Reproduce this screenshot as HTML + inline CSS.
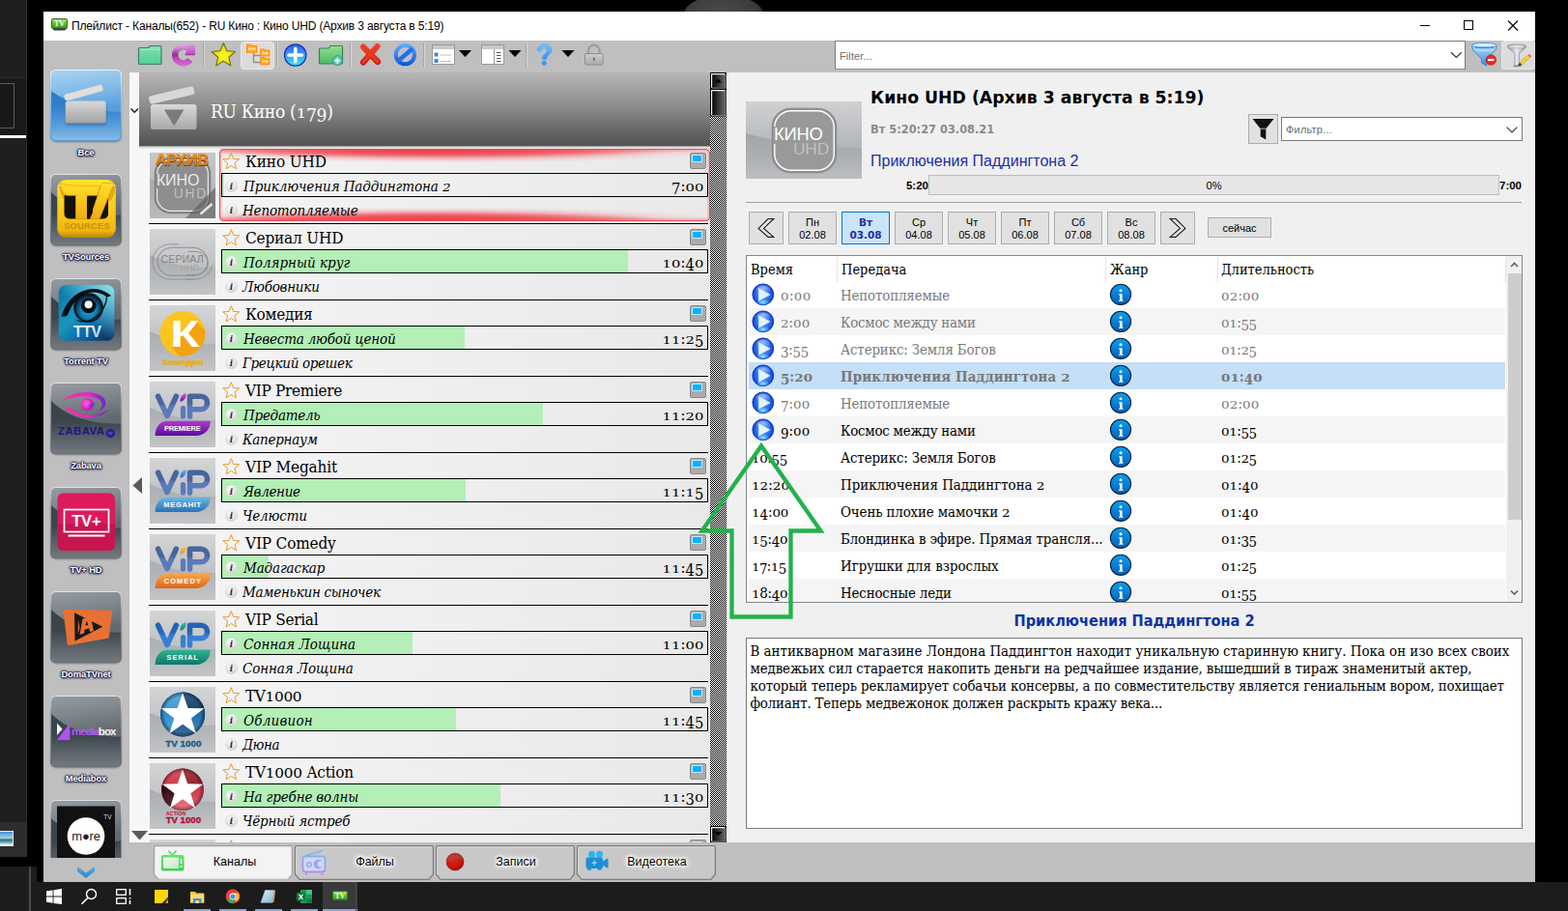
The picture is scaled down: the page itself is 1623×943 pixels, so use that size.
<!DOCTYPE html>
<html lang="ru"><head><meta charset="utf-8"><title>Плейлист</title>
<style>

*{box-sizing:border-box;margin:0;padding:0}
html,body{width:1623px;height:943px;overflow:hidden;background:#000}
body{position:relative;font-family:"Liberation Sans",sans-serif;font-size:12px;color:#000}
.abs{position:absolute}
.ser{font-family:"DejaVu Serif Condensed","DejaVu Serif","Liberation Serif",serif}
.nw{white-space:nowrap}
svg{display:block;overflow:visible}
.o0{display:inline-block;transform:translateY(.1em) scaleY(.71)}
.o3{display:inline-block;transform:translateY(.2em)}

#dleft{left:0;top:0;width:28px;height:897px;background:#1f1f1f;border-right:1px solid #2b2b2b}
#dband{left:0;top:80px;width:27px;height:60px;background:#191919;border-top:1px solid #2b2b2b}
#dbox{left:-1px;top:86px;width:16px;height:47px;border:1px solid #5a5a5a}
#dline{left:0;top:140px;width:27px;height:3px;background:#fff}
#dband2{left:0;top:851px;width:28px;height:36px;background:#2d2d2d}
#dthumb{left:0;top:860px;width:14px;height:16px;background:linear-gradient(#4a90d8,#9fd0ee 45%,#3a7a48 60%,#5d9ad0 75%,#fff);border:1px solid #e8e8e8;border-left:0}
#dblack{left:0;top:887px;width:45px;height:10px;background:#000}
#dblob{left:706px;top:0;width:86px;height:12px;overflow:hidden}
#dblob:before{content:"";position:absolute;left:2px;top:-5px;width:82px;height:40px;border-radius:50%;background:radial-gradient(ellipse at 45% 40%,#4a4a4a 0,#3c3c3c 55%,#2c2c2c 80%,#000 100%)}
#win{left:45px;top:12px;width:1544px;height:901px;background:#bfbfbf}

#tb{left:45px;top:12px;width:1544px;height:30px;background:#fff}
#tbtitle{left:74px;top:20px;font-size:12px;line-height:14px;letter-spacing:-0.16px;color:#000}
#tbicon{left:53px;top:19px}

#tsel{left:249px;top:43px;width:35px;height:29px;background:#dcdcdc;border:1px solid #e9e9e9;border-radius:4px}
#flt{left:864px;top:42px;width:653px;height:30px;background:#fff;border:1px solid #7a7a7a;border-bottom-color:#8c8c8c}
#flt span{position:absolute;left:4px;top:9px;font-size:11px;color:#6d6d6d;letter-spacing:0.1px}
#tsel2{left:1554px;top:42px;width:35px;height:30px;background:#dcdcdc;border:1px solid #e6e6e6;border-radius:3px}

.sb{left:52px;width:74px;height:74px}
.sbl{left:45px;width:88px;text-align:center;font-size:9.4px;font-weight:bold;line-height:12px;color:#fff;letter-spacing:-0.1px;text-shadow:0 0 1.5px #120c3a,0 0 1.5px #120c3a,0 0 2px #120c3a,0 1px 2.5px #120c3a,0 0 3px rgba(18,12,58,.8)}

#lst{left:134px;top:75px;width:601px;height:797px;background:linear-gradient(90deg,#f7f7f7 0,#f3f3f3 120px,#e9e9e9 100%);overflow:hidden}
#lhd{left:144px;top:75px;width:591px;height:76px;background:linear-gradient(180deg,#b6b6b6 0,#8e8e8e 45%,#606060 85%,#545454 100%)}
#lhd2{left:144px;top:151px;width:591px;height:3px;background:linear-gradient(180deg,#8a8a8a,#d8d8d8 50%,#efefef)}
#lhdt{left:218px;top:103px;font-size:19px;line-height:24px;color:#fff;letter-spacing:-0.3px}
.sepl{left:154px;width:579px;height:1px;background:#000}
.logo{left:155px;width:68px;height:68px;background:linear-gradient(180deg,#adb0b4 0,#abaeb2 40%,#b4b7ba 70%,#c3c5c7 100%);overflow:hidden}
.logo:before{content:"";position:absolute;left:-50px;top:-120px;width:220px;height:160px;border-radius:50%;background:linear-gradient(180deg,#d3d5d7 0,#d3d5d7 75%,#cdcfd1 82%,#bec0c3 100%)}
.logo svg{position:absolute;left:0;top:0}
.cn{left:254px;font-size:17px;line-height:20px;color:#000}
.pbox{left:229px;width:504px;height:25px;border:1px solid #000;overflow:hidden}
.pbar{position:absolute;left:0;top:0;height:23px;background:#b3efb6}
.pt{left:252px;font-size:15px;line-height:18px;font-style:italic;color:#000}
.pt2{left:251px;font-size:15px;line-height:18px;font-style:italic;color:#000}
.tm{right:894.5px;font-size:16.4px;line-height:18px;color:#000;text-align:right;letter-spacing:0.1px}
.ii{width:13px;height:13px;border-radius:50%;background:radial-gradient(circle at 45% 35%,#fff 0,#e4e4e4 45%,#c4c4c4 100%);font-family:"DejaVu Serif Condensed","Liberation Serif",serif;font-style:italic;font-weight:bold;font-size:9.8px;line-height:13.5px;text-align:center;color:#2c2c2c}
.mon{left:714px;width:17px;height:17px;background:#ababab;border:1px solid #8a8a8a;border-radius:2px}
.mon:before{content:"";position:absolute;left:1px;top:1px;width:11px;height:8px;background:#00b4ff;border:1px solid #c4e8fa;box-sizing:border-box}
#selbox{left:227px;top:154px;width:508px;height:75px;border:1px solid #e2545e;border-radius:4px;background:radial-gradient(ellipse 250px 8px at 42% 0,rgba(238,60,70,.8) 0,rgba(240,80,90,.6) 60%,rgba(242,130,136,0) 100%),radial-gradient(ellipse 310px 15px at 46% -1px,rgba(238,50,62,.95) 0,rgba(239,66,76,.85) 35%,rgba(241,110,118,.55) 62%,rgba(243,160,164,.25) 82%,rgba(244,190,192,0) 100%),radial-gradient(ellipse 250px 8px at 42% 100%,rgba(238,60,70,.8) 0,rgba(240,80,90,.6) 60%,rgba(242,130,136,0) 100%),radial-gradient(ellipse 310px 15px at 44% calc(100% + 1px),rgba(238,50,62,.95) 0,rgba(239,66,76,.85) 35%,rgba(241,110,118,.55) 62%,rgba(243,160,164,.25) 82%,rgba(244,190,192,0) 100%),linear-gradient(180deg,rgba(240,120,128,.55) 0,rgba(240,150,156,0) 3px,rgba(240,150,156,0) 70px,rgba(240,120,128,.55) 100%),linear-gradient(90deg,rgba(240,120,128,.5) 0,rgba(240,150,156,0) 3px,rgba(240,150,156,0) 503px,rgba(240,120,128,.5) 100%)}

#rp{left:752px;top:75px;width:837px;height:797px;background:#f0f0f0}
#rlogo{left:772px;top:105px;width:120px;height:80px;background:linear-gradient(180deg,#a4a7ab 0,#a3a6aa 45%,#aeb1b4 75%,#bcbec1 100%);overflow:hidden}
#rlogo:before{content:"";position:absolute;left:-110px;top:-152px;width:460px;height:200px;border-radius:50%;background:linear-gradient(180deg,#cfd1d3 0,#cfd1d3 76%,#c6c8ca 84%,#b3b6b9 100%)}
#rtitle{left:901px;top:90px;font-family:"DejaVu Sans","Liberation Sans",sans-serif;font-weight:bold;font-size:17.3px;line-height:22px;color:#000}
#rdate{left:901px;top:127px;font-family:"DejaVu Sans","Liberation Sans",sans-serif;font-weight:bold;font-size:11.4px;line-height:14px;color:#8a8a8a}
#rprog{left:901px;top:157px;font-size:16px;line-height:20px;color:#1a2fa8}
#pb{left:961px;top:181px;width:591px;height:21px;background:#e6e6e6;border:1px solid #bcbcbc}
#pbt{left:961px;top:186px;width:591px;text-align:center;font-size:11px;line-height:13px;color:#000}
.bt{font-family:"Liberation Sans",sans-serif;font-weight:bold;font-size:11.5px;line-height:13px;color:#000}
#hr1{left:772px;top:209px;width:803px;height:1px;background:#a0a0a0}
.db{top:219px;width:50px;height:34px;background:#e1e1e1;border:1px solid #adadad;text-align:center;font-size:11px;line-height:13px;padding-top:4px;color:#000}
.dbs{background:#cce4f7;border-color:#0078d7;color:#1a2fa8;font-weight:bold;font-family:"DejaVu Sans","Liberation Sans",sans-serif;font-size:10.5px}
.nb{top:219px;width:36px;height:34px;background:#e1e1e1;border:1px solid #adadad}
#now{left:1250px;top:225px;width:66px;height:21px;background:#e1e1e1;border:1px solid #adadad;text-align:center;font-size:11px;line-height:20px}
#fbtn{left:1292px;top:118px;width:31px;height:31px;background:#e1e1e1;border:1px solid #adadad}
#fcb{left:1326px;top:121px;width:250px;height:25px;background:#fff;border:1px solid #7a7a7a}
#fcb span{position:absolute;left:4px;top:6px;font-size:11px;color:#6d6d6d;letter-spacing:0.2px}
#epg{left:772px;top:264px;width:804px;height:360px;background:#fff;border:1px solid #828790;overflow:hidden}
.eh{position:absolute;top:4px;font-size:14.5px;line-height:20px;color:#000}
.er{position:absolute;left:2px;width:783px;height:28px}
.er.alt{background:#f5f5f5}
.er.sel{background:#c5dff6}
.er>span{position:absolute;top:5px;font-size:14.9px;line-height:20px;white-space:nowrap}
.er.old>span{color:#7a7a7a}
.er.sel>span{font-weight:bold;color:#777}
.c1{left:33px}.c1b{left:3px}.c2{left:95px}.c4{left:489px}
.vsep{position:absolute;top:1px;width:1px;height:26px;background:#e5e5e5}
#dtitle{left:772px;top:633px;width:804px;text-align:center;font-family:"DejaVu Sans Condensed","DejaVu Sans","Liberation Sans",sans-serif;font-weight:bold;font-size:16.2px;line-height:20px;color:#0d33a6}
#desc{left:772px;top:660px;width:804px;height:198px;background:#fff;border:1px solid #7a7a7a;padding:4px 0 4px 3.5px;white-space:nowrap;font-size:14.9px;line-height:18px;color:#000}

#tabbar{left:134px;top:872px;width:1455px;height:41px;background:#bfbfbf}
.tab{top:875px;width:144px;height:36px}
.tabl{top:885px;font-size:12.5px;line-height:15px;color:#000;text-align:center;width:100px}
.tabl.g{text-shadow:0 0 2px #fff,0 0 3px #fff,0 0 4px #fff,0 0 5px #fff,0 0 6px #fff,0 0 7px rgba(255,255,255,.8)}

#tk{left:0;top:913px;width:1623px;height:30px;background:#1c1c1c}
#tk0{left:0;top:897px;width:38px;height:16px;background:#1c1c1c}
#tkl{left:30px;top:897px;width:2px;height:46px;background:#4a4a4a}
#tkact{left:334px;top:913px;width:36px;height:30px;background:#3a3a3a}
.tku{top:941px;height:2px;background:#8aa7cf}

</style></head>
<body>
<!-- p_desktop -->
<div id="win" class="abs"></div>
<div id="dblob" class="abs"></div><div id="dleft" class="abs"></div><div id="dband" class="abs"></div><div id="dbox" class="abs"></div><div id="dline" class="abs"></div>
<div id="dband2" class="abs"></div><div id="dthumb" class="abs"></div><div id="dblack" class="abs"></div>
<!-- p_titlebar -->
<div id="tb" class="abs"></div><svg id="tbicon" class="abs" width="17" height="13" viewBox="0 0 17 13">
<defs><linearGradient id="tvg" x1="0" y1="0" x2="0" y2="1"><stop offset="0" stop-color="#8fe04a"/><stop offset="1" stop-color="#2f9a12"/></linearGradient></defs>
<rect x="0.5" y="0.5" width="16" height="10" rx="1" fill="url(#tvg)" stroke="#3d6a2a" stroke-width="1"/>
<path d="M1 10.5h15l-2 2H3z" fill="#2c3e50"/>
<text x="8.5" y="8.3" font-family="Liberation Serif" font-weight="bold" font-size="8" fill="#fff" text-anchor="middle">TV</text>
</svg>
<div id="tbtitle" class="abs nw">Плейлист - Каналы(652) - RU Кино : Кино UHD (Архив 3 августа в 5:19)</div><svg class="abs" style="left:1460px;top:12px" width="128" height="30" viewBox="0 0 128 30">
<path d="M10 14.5h10" stroke="#000" stroke-width="1"/>
<rect x="55.5" y="9.5" width="9" height="9" fill="none" stroke="#000" stroke-width="1"/>
<path d="M101 9.5l10 10M111 9.5l-10 10" stroke="#000" stroke-width="1.1"/>
</svg>
<!-- p_toolbar -->
<div id="tsel" class="abs"></div><div id="tsel2" class="abs"></div><div id="flt" class="abs"><span>Filter...</span></div><svg class="abs" style="left:45px;top:42px" width="1544" height="33" viewBox="45 42 1544 33">
<defs>
<linearGradient id="gfold" x1="0" y1="0" x2="0" y2="1"><stop offset="0" stop-color="#7fe0b0"/><stop offset="1" stop-color="#52cf93"/></linearGradient>
<linearGradient id="gfold2" x1="0" y1="0" x2="0" y2="1"><stop offset="0" stop-color="#8fe08f"/><stop offset="1" stop-color="#4fb86a"/></linearGradient>
<linearGradient id="gpur" gradientUnits="userSpaceOnUse" x1="0" y1="45" x2="0" y2="69"><stop offset="0" stop-color="#e2b0e2"/><stop offset="0.22" stop-color="#cc84cc"/><stop offset="0.5" stop-color="#8c308c"/><stop offset="0.62" stop-color="#c040c0"/><stop offset="1" stop-color="#d478d4"/></linearGradient>
<linearGradient id="gpur2" gradientUnits="userSpaceOnUse" x1="0" y1="46" x2="0" y2="58"><stop offset="0" stop-color="#d898d8"/><stop offset="0.7" stop-color="#c855c8"/><stop offset="1" stop-color="#8c308c"/></linearGradient>
<radialGradient id="gstar" cx="0.5" cy="0.6" r="0.6"><stop offset="0" stop-color="#f6ff2a"/><stop offset="1" stop-color="#e6c810"/></radialGradient>
<linearGradient id="gplus" x1="0" y1="0" x2="0" y2="1"><stop offset="0" stop-color="#2f5fe8"/><stop offset="0.5" stop-color="#3f9af5"/><stop offset="1" stop-color="#2ff0f0"/></linearGradient>
<linearGradient id="gred" x1="0" y1="0" x2="0" y2="1"><stop offset="0" stop-color="#f04a2a"/><stop offset="1" stop-color="#c8140f"/></linearGradient>
<linearGradient id="gblue" x1="0" y1="0" x2="0" y2="1"><stop offset="0" stop-color="#5aa8ff"/><stop offset="1" stop-color="#0f58e0"/></linearGradient>
<linearGradient id="gq" x1="0" y1="0" x2="0" y2="1"><stop offset="0" stop-color="#7cc4ff"/><stop offset="1" stop-color="#2f8df2"/></linearGradient>
<linearGradient id="glock" x1="0" y1="0" x2="0" y2="1"><stop offset="0" stop-color="#cfcfcf"/><stop offset="1" stop-color="#a9a9a9"/></linearGradient>
<linearGradient id="gfun" x1="0" y1="0" x2="0" y2="1"><stop offset="0" stop-color="#bfe4ff"/><stop offset="1" stop-color="#2f8fe0"/></linearGradient>
<linearGradient id="gfun2" x1="0" y1="0" x2="1" y2="0"><stop offset="0" stop-color="#8a8f96"/><stop offset="0.5" stop-color="#e8eaee"/><stop offset="1" stop-color="#8a8f96"/></linearGradient>
</defs>
<!-- folder -->
<path d="M144.5 49.5h9l2 -2h10.5a1 1 0 0 1 1 1v17a1 1 0 0 1 -1 1h-21.5a1 1 0 0 1 -1 -1v-15a1 1 0 0 1 1 -1z" fill="url(#gfold)" stroke="#3f7f63" stroke-width="1.2"/>
<path d="M145 51h21" stroke="#a8efcd" stroke-width="1"/>
<!-- refresh -->
<path d="M196.8 61.9A8.6 8.6 0 1 1 196.4 51.5" fill="none" stroke="url(#gpur)" stroke-width="6.4"/>
<path d="M195.5 46.6L202 46.8L202 57.3L191.2 57.3Z" fill="url(#gpur2)"/>
<path d="M210.5 44v25" stroke="#a6a6a6" stroke-width="1"/><path d="M211.5 44v25" stroke="#d6d6d6" stroke-width="1"/>
<!-- star -->
<path d="M231.3 44.6l3.5 8.1l8.8 0.8l-6.7 5.8l2 8.6l-7.6 -4.6l-7.6 4.6l2 -8.6l-6.7 -5.8l8.8 -0.8z" fill="url(#gstar)" stroke="#7d7410" stroke-width="1.2" stroke-linejoin="round"/>
<!-- tree folders -->
<path d="M262.5 55v9.5h7M262.5 57.5h7" stroke="#8c8c8c" stroke-width="1.3" fill="none"/>
<g fill="#ffb52a" stroke="#ff8a10" stroke-width="1.2">
<path d="M255.6 46.3h4l1 1.3h5v6.6h-10z"/><path d="M269.8 51h3.6l1 1.3h4.3v5.7h-8.9z"/><path d="M269.8 59.6h3.6l1 1.3h4.3v5.7h-8.9z"/>
</g>
<path d="M257 50.5h7.5M271 55h6.5M271 63.5h6.5" stroke="#ffe9a8" stroke-width="1.4"/>
<path d="M286.5 44v25" stroke="#a6a6a6" stroke-width="1"/><path d="M287.5 44v25" stroke="#d6d6d6" stroke-width="1"/>
<!-- plus -->
<circle cx="305.7" cy="57" r="11.2" fill="url(#gplus)" stroke="#1f36b8" stroke-width="1.3"/>
<path d="M305.7 50.3v13.4M299 57h13.4" stroke="#fff" stroke-width="3.6" stroke-linecap="round"/>
<!-- folder plus -->
<path d="M331.5 50h8.5l2 -2.5h11.5a1 1 0 0 1 1 1v16.5a1 1 0 0 1 -1 1h-22a1 1 0 0 1 -1 -1v-14a1 1 0 0 1 1 -1z" fill="url(#gfold2)" stroke="#3f7f4f" stroke-width="1.2"/>
<circle cx="349.3" cy="62.7" r="5" fill="#52c8b8" stroke="#2f8f86" stroke-width="0.8"/>
<path d="M349.3 59.7v6M346.3 62.7h6" stroke="#fff" stroke-width="1.6"/>
<path d="M362.5 44v25" stroke="#a6a6a6" stroke-width="1"/><path d="M363.5 44v25" stroke="#d6d6d6" stroke-width="1"/>
<!-- red x -->
<path d="M376 48.500l15 15.500M390.500 48l-14.500 16.500" stroke="url(#gred)" stroke-width="6.200" stroke-linecap="round"/>
<path d="M376 48.500l15 15.500M390.500 48l-14.500 16.500" stroke="#ea3a22" stroke-width="3.400" stroke-linecap="round"/>
<!-- no sign -->
<circle cx="419.4" cy="56.7" r="9.6" fill="none" stroke="url(#gblue)" stroke-width="4"/>
<path d="M412 63l15 -12.5" stroke="#1f6ff0" stroke-width="4.4"/>
<path d="M438.5 44v25" stroke="#a6a6a6" stroke-width="1"/><path d="M439.5 44v25" stroke="#d6d6d6" stroke-width="1"/>
<!-- list icon -->
<rect x="447.5" y="46.5" width="23" height="20" fill="#fff" stroke="#9a9a9a" stroke-width="1"/>
<rect x="448" y="47" width="22" height="4" fill="#c9c9c9"/>
<rect x="449.5" y="54.5" width="4" height="4" fill="#3f86e8"/><rect x="449.5" y="61" width="4" height="4" fill="#3f86e8"/>
<path d="M456 57h11M456 63.5h11" stroke="#bdbdbd" stroke-width="1.2"/>
<path d="M475 52h13l-6.5 7z" fill="#000"/>
<!-- panel icon -->
<rect x="498.5" y="46.5" width="23" height="20" fill="#fff" stroke="#9a9a9a" stroke-width="1"/>
<rect x="499" y="47" width="22" height="4" fill="#c9c9c9"/>
<path d="M511.5 51v15.5" stroke="#9a9a9a" stroke-width="1"/>
<path d="M514 54.5h4.5M514 57.5h4.5M514 60.5h4.5M514 63.5h4.5" stroke="#555" stroke-width="1.1"/>
<path d="M526.5 52h13l-6.5 7z" fill="#000"/><path d="M544.5 44v25" stroke="#a6a6a6" stroke-width="1"/><path d="M545.5 44v25" stroke="#d6d6d6" stroke-width="1"/>
<!-- question -->
<path d="M556 52.5c0 -4.5 3.2 -6.8 7.5 -6.8c4.6 0 7.6 2.6 7.6 6.1c0 5 -5.6 5.2 -5.6 9.8h-4.4c0 -5.5 5 -6.5 5 -9.2c0 -1.6 -1.2 -2.6 -2.8 -2.6c-1.9 0 -3 1.2 -3.1 3.3z" fill="url(#gq)" stroke="#5aa8f0" stroke-width="0.6"/>
<circle cx="563.2" cy="65.3" r="2.5" fill="#3f9af5"/>
<path d="M581.5 52h13l-6.5 7z" fill="#000"/>
<!-- lock -->
<path d="M609 56v-3.5a5.8 5.8 0 0 1 11.6 0v3.5" fill="none" stroke="#9c9c9c" stroke-width="2.2"/>
<rect x="605.5" y="55.5" width="18.6" height="11.6" rx="1.5" fill="url(#glock)" stroke="#8f8f8f" stroke-width="1"/>
<rect x="614" y="59.5" width="1.6" height="3.4" fill="#666"/>
<!-- filter combobox chevron -->
<path d="M1502 54.200l5.400 5.300l5.400 -5.300" fill="none" stroke="#333" stroke-width="1.200"/>
<!-- funnel blue w/ red minus -->
<path d="M1524 46.700c0 -1.600 5.500 -2.100 12.300 -2.100s12.300 0.500 12.300 2.100v3.300c0 2 -2 3.200 -4 5.200l-5.800 5.600v7.400l-5.200 -3v-4.400l-5.800 -5.600c-2 -2 -3.800 -3.200 -3.800 -5.200z" fill="url(#gfun)" stroke="#2f86dc" stroke-width="0.900" stroke-linejoin="round"/>
<ellipse cx="1536.300" cy="46.600" rx="11" ry="1.500" fill="#d9f0ff"/>
<path d="M1526 48.600c3 1.100 17.600 1.100 20.600 0" fill="none" stroke="#2a7fd6" stroke-width="1.100"/>
<path d="M1527.500 51.800c3 1 14.600 1 17.600 0" fill="none" stroke="#e0f3ff" stroke-width="0.900" opacity=".85"/>
<circle cx="1543.300" cy="62" r="5.300" fill="#e8281f" stroke="#b8150f" stroke-width="0.6"/>
<rect x="1540.100" y="60.900" width="6.400" height="2.200" fill="#fff"/>
<!-- funnel gray w/ pencil -->
<path d="M1560.300 48.300c0 -1.700 4.400 -2.300 9.700 -2.300s9.700 0.600 9.700 2.300c0 2.200 -6.300 4.400 -7.300 7.700v12h-4.500v-12c-1 -3.300 -7.600 -5.500 -7.600 -7.700z" fill="url(#gfun2)" stroke="#8a8f97" stroke-width="0.700"/>
<ellipse cx="1570" cy="48.200" rx="8.700" ry="1.500" fill="#e4e6ea" stroke="#9a9fa6" stroke-width="0.500"/>
<ellipse cx="1570.500" cy="68.300" rx="4.500" ry="0.900" fill="rgba(60,60,60,.45)"/>
<path d="M1571.300 68.300l1.700 -3.600l8.600 -7.700l2.300 2.600l-8.600 7.700z" fill="#ecd23c" stroke="#b49a2a" stroke-width="0.500"/>
<path d="M1581.600 57l1.400 -1.250l2.300 2.600l-1.400 1.250z" fill="#ee5a66"/>
<path d="M1571.300 68.300l1.700 -3.600l2.300 2.600z" fill="#2c2c2c"/>
</svg>
<!-- p_sidebar -->
<div class="abs" style="left:45px;top:75px;width:89px;height:838px;background:#bfbfbf"></div><svg width="0" height="0" style="position:absolute"><defs>
<linearGradient id="sbB" x1="0" y1="0" x2="0" y2="1"><stop offset="0" stop-color="#38424a"/><stop offset="0.55" stop-color="#3b454d"/><stop offset="0.78" stop-color="#596168"/><stop offset="1" stop-color="#74797d"/></linearGradient>
<linearGradient id="sbT" x1="0" y1="0" x2="0.25" y2="1"><stop offset="0" stop-color="#969ca1"/><stop offset="0.5" stop-color="#7f868b"/><stop offset="1" stop-color="#626a70"/></linearGradient>
<linearGradient id="sbS" x1="0" y1="0" x2="0" y2="1"><stop offset="0" stop-color="#dfe3e6"/><stop offset="0.25" stop-color="#9aa0a5"/><stop offset="1" stop-color="#6a7075"/></linearGradient>
<linearGradient id="sbB0" x1="0" y1="0" x2="0" y2="1"><stop offset="0" stop-color="#2576c4"/><stop offset="0.5" stop-color="#2e7fcb"/><stop offset="0.8" stop-color="#5a9fdc"/><stop offset="1" stop-color="#86bbe8"/></linearGradient>
<linearGradient id="sbT0" x1="0" y1="0" x2="0.2" y2="1"><stop offset="0" stop-color="#a8d4f4"/><stop offset="0.6" stop-color="#7fb8e6"/><stop offset="1" stop-color="#5a9fdc"/></linearGradient>
<linearGradient id="sbS0" x1="0" y1="0" x2="0" y2="1"><stop offset="0" stop-color="#eaf4fc"/><stop offset="0.3" stop-color="#a4cdee"/><stop offset="1" stop-color="#5a9bd6"/></linearGradient>
<filter id="sbsh" x="-10%" y="-10%" width="120%" height="125%"><feGaussianBlur stdDeviation="1.1"/></filter>
</defs></svg><svg class="sb abs" style="top:72px" width="74" height="74" viewBox="0 0 74 74"><rect x="1" y="2.5" width="72" height="72" rx="5" fill="rgba(0,0,0,.55)" filter="url(#sbsh)"/>
<rect x="0.5" y="0.5" width="73" height="73" rx="5" fill="url(#sbB0)"/>
<path d="M0.5 5.5a5 5 0 0 1 5 -5h63a5 5 0 0 1 5 5V44C52 43 22 37 0.5 22Z" fill="url(#sbT0)"/>
<rect x="0.5" y="0.5" width="73" height="73" rx="5" fill="none" stroke="url(#sbS0)" stroke-width="1.1"/><defs><linearGradient id="gcl" x1="0" y1="0" x2="0" y2="1"><stop offset="0" stop-color="#d8d8d8"/><stop offset="1" stop-color="#a4a4a4"/></linearGradient></defs>
<rect x="16.5" y="34.5" width="41.5" height="23" rx="2.5" fill="rgba(0,40,90,.35)" filter="url(#sbsh)"/>
<rect x="15.7" y="32.5" width="42" height="23" rx="2.5" fill="url(#gcl)"/>
<rect x="15.7" y="25.800" width="41" height="7" rx="2.4" fill="#dedede" transform="rotate(-15.4 15.7 32.800)"/></svg><div class="sbl abs nw" style="top:152px">Все</div><svg class="sb abs" style="top:180px" width="74" height="74" viewBox="0 0 74 74"><rect x="1" y="2.5" width="72" height="72" rx="5" fill="rgba(0,0,0,.55)" filter="url(#sbsh)"/>
<rect x="0.5" y="0.5" width="73" height="73" rx="5" fill="url(#sbB)"/>
<path d="M0.5 5.5a5 5 0 0 1 5 -5h63a5 5 0 0 1 5 5V42.500C54 43.500 22 40 0.500 18.500Z" fill="url(#sbT)"/>
<rect x="0.5" y="0.5" width="73" height="73" rx="5" fill="none" stroke="url(#sbS)" stroke-width="1.1"/><defs><linearGradient id="gtvs" x1="0" y1="0" x2="0" y2="1"><stop offset="0" stop-color="#ffe22e"/><stop offset="0.7" stop-color="#f6c216"/><stop offset="0.88" stop-color="#f0b40e"/><stop offset="1" stop-color="#b88508"/></linearGradient>
<linearGradient id="gtvl" x1="0" y1="0" x2="0" y2="1"><stop offset="0" stop-color="#ffe02a"/><stop offset="1" stop-color="#f0ac12"/></linearGradient></defs>
<rect x="7.3" y="6" width="60.5" height="60" rx="9" fill="url(#gtvs)"/>
<path d="M9.500 13c1 8 3 13.500 8 15h45c3 -4 4.500 -9 5 -15z" fill="#d9970f" opacity=".75"/>
<rect x="14.5" y="19" width="45.5" height="27.5" rx="5" fill="#15110a"/>
<path d="M10.500 9.500c6 2.300 14 2.800 22 2.800h19l-2.500 10h-11v24.200h-11.500v-24.200h-8.500c-4.500 0 -7 -6.500 -7.500 -12.800z" fill="url(#gtvl)" stroke="#e3a412" stroke-width="0.7"/>
<path d="M53.500 9.500h12.500l-15 37h-10z" fill="url(#gtvl)" stroke="#e3a412" stroke-width="0.7"/>
<path d="M38 23.500l6.200 15.500l-3.200 7.500h-3z" fill="#15110a"/>
<text x="38" y="56.600" font-family="Liberation Sans" font-weight="bold" font-size="9.3" fill="#c4920e" text-anchor="middle" letter-spacing="0.25">SOURCES</text></svg><div class="sbl abs nw" style="top:260px">TVSources</div><svg class="sb abs" style="top:288px" width="74" height="74" viewBox="0 0 74 74"><rect x="1" y="2.5" width="72" height="72" rx="5" fill="rgba(0,0,0,.55)" filter="url(#sbsh)"/>
<rect x="0.5" y="0.5" width="73" height="73" rx="5" fill="url(#sbB)"/>
<path d="M0.5 5.5a5 5 0 0 1 5 -5h63a5 5 0 0 1 5 5V42.500C54 43.500 22 40 0.500 18.500Z" fill="url(#sbT)"/>
<rect x="0.5" y="0.5" width="73" height="73" rx="5" fill="none" stroke="url(#sbS)" stroke-width="1.1"/><defs><linearGradient id="gttv" x1="0" y1="0" x2="0.9" y2="1"><stop offset="0" stop-color="#0a74a4"/><stop offset="0.45" stop-color="#1796bd"/><stop offset="0.75" stop-color="#0b62a0"/><stop offset="1" stop-color="#07315f"/></linearGradient>
<linearGradient id="gttv2" x1="0" y1="1" x2="1" y2="0"><stop offset="0.45" stop-color="rgba(140,230,236,0)"/><stop offset="1" stop-color="rgba(150,234,238,.95)"/></linearGradient>
<radialGradient id="geye" cx="0.5" cy="0.6" r="0.55"><stop offset="0" stop-color="#1fa8d4"/><stop offset="0.55" stop-color="#0f7fb2"/><stop offset="1" stop-color="#06324f"/></radialGradient>
<linearGradient id="gttvt" x1="0" y1="0" x2="0" y2="1"><stop offset="0" stop-color="#ffffff"/><stop offset="1" stop-color="#a8c8ee"/></linearGradient></defs>
<rect x="8.7" y="7" width="57.700" height="57.800" rx="7.500" fill="url(#gttv)"/><rect x="8.7" y="7" width="57.700" height="57.800" rx="7.500" fill="url(#gttv2)"/>
<circle cx="39.600" cy="30.500" r="15.300" fill="#081722"/>
<circle cx="39.600" cy="31" r="13" fill="url(#geye)"/><circle cx="39.600" cy="28.500" r="7.800" fill="#050f18"/><circle cx="39.600" cy="27.300" r="4" fill="#fff"/>
<path d="M11.500 39c4 -12 12 -24 28 -27.500c10 -2 18 2 23.500 6.500c-1.500 1.200 -3.500 1.500 -5 1c-5 -4 -12 -5.500 -18 -4c-11 3 -18 12 -22 23c-2 2 -4.500 2 -6.500 1z" fill="#070d14"/>
<path d="M58.500 18c0 10 -6 20 -16 25c-5 2.500 -10 2.500 -15 0.500" fill="none" stroke="#070d14" stroke-width="1.300"/>
<text x="38.300" y="61.300" font-family="Liberation Sans" font-weight="bold" font-size="15.600" fill="url(#gttvt)" text-anchor="middle" letter-spacing="-0.300">TTV</text></svg><div class="sbl abs nw" style="top:368px">Torrent TV</div><svg class="sb abs" style="top:396px" width="74" height="74" viewBox="0 0 74 74"><rect x="1" y="2.5" width="72" height="72" rx="5" fill="rgba(0,0,0,.55)" filter="url(#sbsh)"/>
<rect x="0.5" y="0.5" width="73" height="73" rx="5" fill="url(#sbB)"/>
<path d="M0.5 5.5a5 5 0 0 1 5 -5h63a5 5 0 0 1 5 5V42.500C54 43.500 22 40 0.500 18.500Z" fill="url(#sbT)"/>
<rect x="0.5" y="0.5" width="73" height="73" rx="5" fill="none" stroke="url(#sbS)" stroke-width="1.1"/><defs><linearGradient id="gzab" gradientUnits="userSpaceOnUse" x1="12" y1="0" x2="62" y2="0"><stop offset="0" stop-color="#ff28a8"/><stop offset="0.55" stop-color="#e82ac0"/><stop offset="1" stop-color="#4a28c8"/></linearGradient>
<radialGradient id="gzb" cx="0.4" cy="0.4" r="0.7"><stop offset="0" stop-color="#ff6ad8"/><stop offset="0.6" stop-color="#e020c0"/><stop offset="1" stop-color="#8a28c8"/></radialGradient></defs>
<path d="M12.500 18.500c10 -9 32 -12 42 -3.500c5 4.500 3 12.500 -4 14.500c4 -4 4 -9.500 0 -12c-9 -5.500 -26 -3.500 -38 1z" fill="url(#gzab)"/>
<path d="M16 26.500c2 -1.500 4.500 -1 6 0.500c8 8 26 9.500 38.500 1c-9 11 -33 11.500 -44.500 -1.500z" fill="url(#gzab)"/>
<circle cx="38.500" cy="22.800" r="6.800" fill="url(#gzb)"/><path d="M40 24c1 -3 4 -4 6.500 -2.500c-1 3.500 -3.500 5 -6.500 5z" fill="#8a30c8" opacity=".8"/>
<text x="8" y="53.700" font-family="Liberation Sans" font-weight="bold" font-size="11.400" fill="#24157e" letter-spacing="0.45">ZABAVA</text>
<circle cx="62.300" cy="52.600" r="4.600" fill="#2c1c96"/><text x="62.300" y="54.300" font-family="Liberation Sans" font-style="italic" font-size="4.500" fill="#9a90e0" text-anchor="middle">ru</text></svg><div class="sbl abs nw" style="top:476px">Zabava</div><svg class="sb abs" style="top:504px" width="74" height="74" viewBox="0 0 74 74"><rect x="1" y="2.5" width="72" height="72" rx="5" fill="rgba(0,0,0,.55)" filter="url(#sbsh)"/>
<rect x="0.5" y="0.5" width="73" height="73" rx="5" fill="url(#sbB)"/>
<path d="M0.5 5.5a5 5 0 0 1 5 -5h63a5 5 0 0 1 5 5V42.500C54 43.500 22 40 0.500 18.500Z" fill="url(#sbT)"/>
<rect x="0.5" y="0.5" width="73" height="73" rx="5" fill="none" stroke="url(#sbS)" stroke-width="1.1"/><rect x="7.500" y="6.500" width="59.500" height="59.500" rx="6" fill="#dc1a5c"/><path d="M7.500 38h59.500v22a6 6 0 0 1 -6 6h-47.500a6 6 0 0 1 -6 -6z" fill="#c7154f"/>
<rect x="14.500" y="23.500" width="46" height="23" fill="none" stroke="#fff" stroke-width="1.700"/>
<path d="M18.500 50.500h38" stroke="#fff" stroke-width="1.800"/>
<text x="37.300" y="41" font-family="Liberation Sans" font-weight="bold" font-size="16.500" fill="#fff" text-anchor="middle" letter-spacing="-0.200">TV+</text></svg><div class="sbl abs nw" style="top:584px">TV+ HD</div><svg class="sb abs" style="top:612px" width="74" height="74" viewBox="0 0 74 74"><rect x="1" y="2.5" width="72" height="72" rx="5" fill="rgba(0,0,0,.55)" filter="url(#sbsh)"/>
<rect x="0.5" y="0.5" width="73" height="73" rx="5" fill="url(#sbB)"/>
<path d="M0.5 5.5a5 5 0 0 1 5 -5h63a5 5 0 0 1 5 5V42.500C54 43.500 22 40 0.500 18.500Z" fill="url(#sbT)"/>
<rect x="0.5" y="0.5" width="73" height="73" rx="5" fill="none" stroke="url(#sbS)" stroke-width="1.1"/><path d="M15 18.700l47.500 1.100a1.800 1.800 0 0 1 1.700 2l-3.300 25.200a2 2 0 0 1 -1.600 1.700l-39.500 7.200a1.800 1.800 0 0 1 -2.100 -1.500l-4.300 -33.700a1.800 1.800 0 0 1 1.600 -2z" fill="#e87034"/>
<path d="M25 22.200l29.200 14.600l-28.600 14.600z" fill="#17181a"/>
<path d="M30.500 45l3 -16.500l8.500 -1.500l3 14l-4 1l-0.800 -3.500l-4.500 1l-0.700 4zM36.300 35.500l2.800 -0.600l-1.200 -4.500z" fill="#e87034"/>
<path d="M29 30l1.500 8l-2 6z" fill="#e87034"/></svg><div class="sbl abs nw" style="top:692px">DomaTVnet</div><svg class="sb abs" style="top:720px" width="74" height="74" viewBox="0 0 74 74"><rect x="1" y="2.5" width="72" height="72" rx="5" fill="rgba(0,0,0,.55)" filter="url(#sbsh)"/>
<rect x="0.5" y="0.5" width="73" height="73" rx="5" fill="url(#sbB)"/>
<path d="M0.5 5.5a5 5 0 0 1 5 -5h63a5 5 0 0 1 5 5V42.500C54 43.500 22 40 0.500 18.500Z" fill="url(#sbT)"/>
<rect x="0.5" y="0.5" width="73" height="73" rx="5" fill="none" stroke="url(#sbS)" stroke-width="1.1"/><path d="M7 28.600l5.600 6.200l-5.600 6.200z" fill="#f4f4f4"/><path d="M7 46h13.400v-17.400z" fill="#b250f4"/>
<text x="22" y="41" font-family="Liberation Sans" font-weight="bold" font-size="11.500" fill="#b458f2" letter-spacing="-0.900">media</text>
<text x="49.800" y="41" font-family="Liberation Sans" font-weight="bold" font-size="11.500" fill="#f2f2f4" letter-spacing="-0.900">box</text></svg><div class="sbl abs nw" style="top:800px">Mediabox</div><svg class="sb abs" style="top:828px;height:60px;overflow:hidden" width="74" height="60" viewBox="0 0 74 60"><rect x="1" y="2.5" width="72" height="78" rx="5" fill="rgba(0,0,0,.55)" filter="url(#sbsh)"/>
<rect x="0.5" y="0.5" width="73" height="79" rx="5" fill="url(#sbB)"/>
<path d="M0.5 5.5a5 5 0 0 1 5 -5h63a5 5 0 0 1 5 5V42.500C54 43.500 22 40 0.500 18.500Z" fill="url(#sbT)"/>
<rect x="0.5" y="0.5" width="73" height="79" rx="5" fill="none" stroke="url(#sbS)" stroke-width="1.1"/><rect x="7" y="6.500" width="60" height="56" fill="#111"/>
<circle cx="37" cy="37.500" r="19.300" fill="#fff"/>
<text x="37" y="42" font-family="Liberation Sans" font-size="13" fill="#222" text-anchor="middle" letter-spacing="-0.200">m●re</text>
<text x="59.500" y="19.500" font-family="Liberation Sans" font-size="6.500" fill="#ddd" text-anchor="middle">TV</text></svg><svg class="abs" style="left:79px;top:896px" width="20" height="14" viewBox="0 0 20 14"><defs><linearGradient id="gchv" x1="0" y1="0" x2="0" y2="1"><stop offset="0" stop-color="#4ab0e8"/><stop offset="1" stop-color="#2f86c0"/></linearGradient></defs><path d="M1 1l9 6.500l9 -6.500v5l-9 7l-9 -7z" fill="url(#gchv)"/></svg>
<!-- p_list -->
<div id="lst" class="abs"></div><div id="lhd" class="abs"></div><div id="lhd2" class="abs"></div><svg class="abs" style="left:150px;top:84px" width="60" height="56" viewBox="150 84 60 56">
<defs><linearGradient id="ghc" x1="0" y1="0" x2="0" y2="1"><stop offset="0" stop-color="#d9d9d9"/><stop offset="1" stop-color="#a8a8a8"/></linearGradient></defs>
<rect x="156" y="108" width="47.5" height="26" rx="2.5" fill="url(#ghc)"/>
<rect x="155.5" y="99.5" width="47.5" height="8.5" rx="2.6" fill="#d8d8d8" transform="rotate(-13 155.5 108)"/>
<path d="M170 113.5h20.4l-10.2 17z" fill="#7a7a7a"/></svg><div id="lhdt" class="abs nw ser">RU Кино (<span class="o0">1</span><span class="o3">7</span><span class="o3">9</span>)</div><svg class="abs" style="left:134px;top:75px" width="20" height="796" viewBox="134 75 20 796">
<path d="M135.5 112.5l3.7 3.7l3.7 -3.7" fill="none" stroke="#222" stroke-width="1.6"/>
<path d="M147 494v17l-9.5 -8.5z" fill="#5a5a5a"/>
<path d="M136 860h17l-8.5 9.5z" fill="#5a5a5a"/></svg><div id="selbox" class="abs"></div><div class="logo abs" style="top:158px"><svg width="68" height="68" viewBox="0 0 68 68"><defs><linearGradient id="garh" x1="0" y1="0" x2="0" y2="1"><stop offset="0" stop-color="#f09a2a"/><stop offset="1" stop-color="#d8700f"/></linearGradient></defs>
<rect x="0" y="0" width="68" height="68" fill="rgba(160,160,160,.25)"/>
<rect x="5.5" y="5.5" width="57" height="57" rx="16" fill="#8e8e8e" stroke="#7f7f7f" stroke-width="1.4"/>
<rect x="7.6" y="7.6" width="52.8" height="52.8" rx="14.5" fill="none" stroke="#e9e9e9" stroke-width="1.2"/>
<rect x="6.500" y="22" width="2.600" height="15" fill="#8e8e8e"/>
<text x="6.900" y="34" font-family="Liberation Sans" font-size="16" fill="#f4f4f4" fill-opacity=".92" textLength="44.500" lengthAdjust="spacing">КИНО</text>
<text x="24.700" y="46.800" font-family="Liberation Sans" font-size="13.800" fill="#c8c8c8" fill-opacity=".9" textLength="33.500" lengthAdjust="spacing">UHD</text>
<path d="M68 36v32h-31z" fill="rgba(90,90,90,.62)"/>
<path d="M52.5 63.5l12 -10.5" stroke="#e4e4e4" stroke-width="2.6"/>
<text x="5.8" y="13" font-family="Liberation Sans" font-weight="bold" font-size="16.3" fill="#4a2806" opacity="0.75" letter-spacing="-0.3" transform="translate(0.6,1.3)">АРХИВ</text>
<text x="5.8" y="13" font-family="Liberation Sans" font-weight="bold" font-size="16.3" fill="url(#garh)" letter-spacing="-0.3">АРХИВ</text>
</svg></div><svg class="abs" style="left:230px;top:158px" width="19" height="18" viewBox="0 0 19 18"><path d="M9.30 0.70L11.59 6.44L17.76 6.85L13.01 10.81L14.53 16.80L9.30 13.50L4.07 16.80L5.59 10.81L0.84 6.85L7.01 6.44Z" fill="none" stroke="#e59a2c" stroke-width="1" stroke-linejoin="miter"/></svg><div id="cn0" class="cn abs nw ser" style="top:157px;letter-spacing:-0.098px">Кино UHD</div><div class="mon abs" style="top:158px"></div><div class="pbox abs" style="top:179px"><div class="pbar" style="width:2px"></div></div><div class="ii abs" style="left:233px;top:186px">i</div><div id="pa0" class="pt abs nw ser" style="top:184px;letter-spacing:-0.095px">Приключения Паддингтона <span class="o0">2</span></div><div class="tm abs nw ser" style="top:184px"><span class="o3">7</span>:<span class="o0">0</span><span class="o0">0</span></div><div class="ii abs" style="left:233px;top:211px">i</div><div id="pb0" class="pt2 abs nw ser" style="top:209px;letter-spacing:-0.183px">Непотопляемые</div><div class="sepl abs" style="top:231px"></div><div class="logo abs" style="top:237px"><svg width="68" height="68" viewBox="0 0 68 68">
<path d="M30.5 15.8h-9.5a18.2 18.2 0 0 0 0 36.4h26a18.2 18.2 0 0 0 18 -15" fill="none" stroke="#8f8f8f" stroke-width="0.9"/>
<path d="M39.5 23.5h9a12 12 0 0 1 0 24h-11M37.5 52h8.5" fill="none" stroke="#8f8f8f" stroke-width="0.9"/>
<rect x="8" y="19.3" width="52" height="29" rx="14.5" fill="none" stroke="#8c8c8c" stroke-width="1"/>
<text x="11.5" y="34.6" font-family="Liberation Sans" font-size="10.6" fill="#858585" letter-spacing="0.1">СЕРИАЛ</text>
<text x="31.5" y="42.6" font-family="Liberation Sans" font-size="8.6" fill="#a4a4a4" letter-spacing="0.3">UHD</text>
</svg></div><svg class="abs" style="left:230px;top:237px" width="19" height="18" viewBox="0 0 19 18"><path d="M9.30 0.70L11.59 6.44L17.76 6.85L13.01 10.81L14.53 16.80L9.30 13.50L4.07 16.80L5.59 10.81L0.84 6.85L7.01 6.44Z" fill="none" stroke="#e59a2c" stroke-width="1" stroke-linejoin="miter"/></svg><div id="cn1" class="cn abs nw ser" style="top:236px;letter-spacing:-0.161px">Сериал UHD</div><div class="mon abs" style="top:237px"></div><div class="pbox abs" style="top:258px"><div class="pbar" style="width:420px"></div></div><div class="ii abs" style="left:233px;top:265px">i</div><div id="pa1" class="pt abs nw ser" style="top:263px;letter-spacing:0.010px">Полярный круг</div><div class="tm abs nw ser" style="top:263px"><span class="o0">1</span><span class="o0">0</span>:<span class="o3">4</span><span class="o0">0</span></div><div class="ii abs" style="left:233px;top:290px">i</div><div id="pb1" class="pt2 abs nw ser" style="top:288px;letter-spacing:-0.234px">Любовники</div><div class="sepl abs" style="top:310px"></div><div class="logo abs" style="top:316px"><svg width="68" height="68" viewBox="0 0 68 68"><defs><linearGradient id="gkom" x1="0" y1="0" x2="1" y2="1"><stop offset="0" stop-color="#fdc822"/><stop offset="1" stop-color="#fabc18"/></linearGradient><clipPath id="ckom"><circle cx="34" cy="29.3" r="23.4"/></clipPath></defs>
<circle cx="34" cy="29.3" r="23.4" fill="url(#gkom)"/>
<path d="M23.500 43.500l23 -28.500l32 32l-30 30z" fill="#f4a30f" clip-path="url(#ckom)"/>
<text x="21.300" y="43.200" font-family="Liberation Sans" font-weight="bold" font-size="39.500" fill="#fff" textLength="30.300" lengthAdjust="spacingAndGlyphs">К</text>
<text x="34.400" y="62" font-family="Liberation Sans" font-weight="bold" font-size="9.900" fill="#7a5a08" opacity=".5" text-anchor="middle" letter-spacing="-0.1">Комедия</text><text x="34" y="61.500" font-family="Liberation Sans" font-weight="bold" font-size="9.900" fill="#f3b414" text-anchor="middle" letter-spacing="-0.1">Комедия</text>
</svg></div><svg class="abs" style="left:230px;top:316px" width="19" height="18" viewBox="0 0 19 18"><path d="M9.30 0.70L11.59 6.44L17.76 6.85L13.01 10.81L14.53 16.80L9.30 13.50L4.07 16.80L5.59 10.81L0.84 6.85L7.01 6.44Z" fill="none" stroke="#e59a2c" stroke-width="1" stroke-linejoin="miter"/></svg><div id="cn2" class="cn abs nw ser" style="top:315px;letter-spacing:-0.250px">Комедия</div><div class="mon abs" style="top:316px"></div><div class="pbox abs" style="top:337px"><div class="pbar" style="width:251px"></div></div><div class="ii abs" style="left:233px;top:344px">i</div><div id="pa2" class="pt abs nw ser" style="top:342px;letter-spacing:-0.195px">Невеста любой ценой</div><div class="tm abs nw ser" style="top:342px"><span class="o0">1</span><span class="o0">1</span>:<span class="o0">2</span><span class="o3">5</span></div><div class="ii abs" style="left:233px;top:369px">i</div><div id="pb2" class="pt2 abs nw ser" style="top:367px;letter-spacing:-0.349px">Грецкий орешек</div><div class="sepl abs" style="top:389px"></div><div class="logo abs" style="top:395px"><svg width="68" height="68" viewBox="0 0 68 68"><defs><linearGradient id="gv3" gradientUnits="userSpaceOnUse" x1="0" y1="12" x2="0" y2="38"><stop offset="0" stop-color="#48659c"/><stop offset="0.4" stop-color="#48659c"/><stop offset="0.56" stop-color="#5b7abc"/><stop offset="1" stop-color="#5b7abc"/></linearGradient>
<linearGradient id="gd3" x1="0" y1="0" x2="0" y2="1"><stop offset="0" stop-color="#f04af0"/><stop offset="1" stop-color="#6a12a4"/></linearGradient>
<linearGradient id="gp3" x1="0" y1="0" x2="0" y2="1"><stop offset="0" stop-color="#b23ad0"/><stop offset="1" stop-color="#560c9c"/></linearGradient></defs>
<g fill="none" stroke="url(#gv3)" stroke-linecap="round" stroke-linejoin="round">
<path d="M8.600 15.200L18 35.500L27.400 15.200" stroke-width="5.600"/><path d="M34.500 27.500V35.900" stroke-width="5.200"/><path d="M41.500 35.900V15.200H52.800a6.750 6.750 0 0 1 0 13.500H43" stroke-width="5.600"/></g>
<path d="M31.600 20.800C31 16 34 12.500 37.600 12C38 16.500 35.500 20.300 31.600 20.800Z" fill="url(#gd3)"/>
<path d="M18 40.800H62.800C62.800 50 56.500 56 48 56H5.600C5.600 47.500 10.500 40.800 18 40.800Z" fill="url(#gp3)"/>
<text x="14.9" y="51.400" font-family="Liberation Sans" font-weight="bold" font-size="7.500" fill="#fff" textLength="37.8" lengthAdjust="spacing">PREMIERE</text>
</svg></div><svg class="abs" style="left:230px;top:395px" width="19" height="18" viewBox="0 0 19 18"><path d="M9.30 0.70L11.59 6.44L17.76 6.85L13.01 10.81L14.53 16.80L9.30 13.50L4.07 16.80L5.59 10.81L0.84 6.85L7.01 6.44Z" fill="none" stroke="#e59a2c" stroke-width="1" stroke-linejoin="miter"/></svg><div id="cn3" class="cn abs nw ser" style="top:394px;letter-spacing:-0.309px">VIP Premiere</div><div class="mon abs" style="top:395px"></div><div class="pbox abs" style="top:416px"><div class="pbar" style="width:332px"></div></div><div class="ii abs" style="left:233px;top:423px">i</div><div id="pa3" class="pt abs nw ser" style="top:421px;letter-spacing:-0.256px">Предатель</div><div class="tm abs nw ser" style="top:421px"><span class="o0">1</span><span class="o0">1</span>:<span class="o0">2</span><span class="o0">0</span></div><div class="ii abs" style="left:233px;top:448px">i</div><div id="pb3" class="pt2 abs nw ser" style="top:446px;letter-spacing:-0.241px">Капернаум</div><div class="sepl abs" style="top:468px"></div><div class="logo abs" style="top:474px"><svg width="68" height="68" viewBox="0 0 68 68"><defs><linearGradient id="gv4" gradientUnits="userSpaceOnUse" x1="0" y1="12" x2="0" y2="38"><stop offset="0" stop-color="#48659c"/><stop offset="0.4" stop-color="#48659c"/><stop offset="0.56" stop-color="#5b7abc"/><stop offset="1" stop-color="#5b7abc"/></linearGradient>
<linearGradient id="gd4" x1="0" y1="0" x2="0" y2="1"><stop offset="0" stop-color="#5fb4f0"/><stop offset="1" stop-color="#2a6cc0"/></linearGradient>
<linearGradient id="gp4" x1="0" y1="0" x2="0" y2="1"><stop offset="0" stop-color="#6ab8e4"/><stop offset="1" stop-color="#2a70b8"/></linearGradient></defs>
<g fill="none" stroke="url(#gv4)" stroke-linecap="round" stroke-linejoin="round">
<path d="M8.600 15.200L18 35.500L27.400 15.200" stroke-width="5.600"/><path d="M34.500 27.500V35.900" stroke-width="5.200"/><path d="M41.500 35.900V15.200H52.800a6.750 6.750 0 0 1 0 13.500H43" stroke-width="5.600"/></g>
<path d="M31.600 20.800C31 16 34 12.500 37.600 12C38 16.500 35.500 20.300 31.600 20.800Z" fill="url(#gd4)"/>
<path d="M18 40.800H62.800C62.800 50 56.500 56 48 56H5.600C5.600 47.500 10.500 40.800 18 40.800Z" fill="url(#gp4)"/>
<text x="14.3" y="51.400" font-family="Liberation Sans" font-weight="bold" font-size="7.500" fill="#fff" textLength="38.9" lengthAdjust="spacing">MEGAHIT</text>
</svg></div><svg class="abs" style="left:230px;top:474px" width="19" height="18" viewBox="0 0 19 18"><path d="M9.30 0.70L11.59 6.44L17.76 6.85L13.01 10.81L14.53 16.80L9.30 13.50L4.07 16.80L5.59 10.81L0.84 6.85L7.01 6.44Z" fill="none" stroke="#e59a2c" stroke-width="1" stroke-linejoin="miter"/></svg><div id="cn4" class="cn abs nw ser" style="top:473px;letter-spacing:-0.168px">VIP Megahit</div><div class="mon abs" style="top:474px"></div><div class="pbox abs" style="top:495px"><div class="pbar" style="width:252px"></div></div><div class="ii abs" style="left:233px;top:502px">i</div><div id="pa4" class="pt abs nw ser" style="top:500px;letter-spacing:-0.301px">Явление</div><div class="tm abs nw ser" style="top:500px"><span class="o0">1</span><span class="o0">1</span>:<span class="o0">1</span><span class="o3">5</span></div><div class="ii abs" style="left:233px;top:527px">i</div><div id="pb4" class="pt2 abs nw ser" style="top:525px;letter-spacing:-0.148px">Челюсти</div><div class="sepl abs" style="top:547px"></div><div class="logo abs" style="top:553px"><svg width="68" height="68" viewBox="0 0 68 68"><defs><linearGradient id="gv5" gradientUnits="userSpaceOnUse" x1="0" y1="12" x2="0" y2="38"><stop offset="0" stop-color="#48659c"/><stop offset="0.4" stop-color="#48659c"/><stop offset="0.56" stop-color="#5b7abc"/><stop offset="1" stop-color="#5b7abc"/></linearGradient>
<linearGradient id="gd5" x1="0" y1="0" x2="0" y2="1"><stop offset="0" stop-color="#ffd23a"/><stop offset="1" stop-color="#f08a1a"/></linearGradient>
<linearGradient id="gp5" x1="0" y1="0" x2="0" y2="1"><stop offset="0" stop-color="#f8a848"/><stop offset="1" stop-color="#e0641a"/></linearGradient></defs>
<g fill="none" stroke="url(#gv5)" stroke-linecap="round" stroke-linejoin="round">
<path d="M8.600 15.200L18 35.500L27.400 15.200" stroke-width="5.600"/><path d="M34.500 27.500V35.900" stroke-width="5.200"/><path d="M41.500 35.900V15.200H52.800a6.750 6.750 0 0 1 0 13.500H43" stroke-width="5.600"/></g>
<path d="M31.600 20.800C31 16 34 12.500 37.600 12C38 16.500 35.500 20.300 31.600 20.800Z" fill="url(#gd5)"/>
<path d="M18 40.800H62.800C62.800 50 56.500 56 48 56H5.600C5.600 47.500 10.500 40.800 18 40.800Z" fill="url(#gp5)"/>
<text x="14.7" y="51.400" font-family="Liberation Sans" font-weight="bold" font-size="7.500" fill="#fff" textLength="38.2" lengthAdjust="spacing">COMEDY</text>
</svg></div><svg class="abs" style="left:230px;top:553px" width="19" height="18" viewBox="0 0 19 18"><path d="M9.30 0.70L11.59 6.44L17.76 6.85L13.01 10.81L14.53 16.80L9.30 13.50L4.07 16.80L5.59 10.81L0.84 6.85L7.01 6.44Z" fill="none" stroke="#e59a2c" stroke-width="1" stroke-linejoin="miter"/></svg><div id="cn5" class="cn abs nw ser" style="top:552px;letter-spacing:-0.154px">VIP Comedy</div><div class="mon abs" style="top:553px"></div><div class="pbox abs" style="top:574px"><div class="pbar" style="width:48px"></div></div><div class="ii abs" style="left:233px;top:581px">i</div><div id="pa5" class="pt abs nw ser" style="top:579px;letter-spacing:-0.143px">Мадагаскар</div><div class="tm abs nw ser" style="top:579px"><span class="o0">1</span><span class="o0">1</span>:<span class="o3">4</span><span class="o3">5</span></div><div class="ii abs" style="left:233px;top:606px">i</div><div id="pb5" class="pt2 abs nw ser" style="top:604px;letter-spacing:-0.265px">Маменькин сыночек</div><div class="sepl abs" style="top:626px"></div><div class="logo abs" style="top:632px"><svg width="68" height="68" viewBox="0 0 68 68"><defs><linearGradient id="gv6" gradientUnits="userSpaceOnUse" x1="0" y1="12" x2="0" y2="38"><stop offset="0" stop-color="#2864b4"/><stop offset="0.4" stop-color="#2864b4"/><stop offset="0.56" stop-color="#3680d4"/><stop offset="1" stop-color="#3680d4"/></linearGradient>
<linearGradient id="gd6" x1="0" y1="0" x2="0" y2="1"><stop offset="0" stop-color="#3fc0a4"/><stop offset="1" stop-color="#0f7f74"/></linearGradient>
<linearGradient id="gp6" x1="0" y1="0" x2="0" y2="1"><stop offset="0" stop-color="#30b494"/><stop offset="1" stop-color="#0c7868"/></linearGradient></defs>
<g fill="none" stroke="url(#gv6)" stroke-linecap="round" stroke-linejoin="round">
<path d="M8.600 15.200L18 35.500L27.400 15.200" stroke-width="5.600"/><path d="M34.500 27.500V35.900" stroke-width="5.200"/><path d="M41.500 35.900V15.200H52.800a6.750 6.750 0 0 1 0 13.500H43" stroke-width="5.600"/></g>
<path d="M31.600 20.800C31 16 34 12.500 37.600 12C38 16.500 35.500 20.300 31.600 20.800Z" fill="url(#gd6)"/>
<path d="M18 40.800H62.800C62.800 50 56.500 56 48 56H5.600C5.600 47.500 10.500 40.800 18 40.800Z" fill="url(#gp6)"/>
<text x="17.6" y="51.400" font-family="Liberation Sans" font-weight="bold" font-size="7.500" fill="#fff" textLength="32.3" lengthAdjust="spacing">SERIAL</text>
</svg></div><svg class="abs" style="left:230px;top:632px" width="19" height="18" viewBox="0 0 19 18"><path d="M9.30 0.70L11.59 6.44L17.76 6.85L13.01 10.81L14.53 16.80L9.30 13.50L4.07 16.80L5.59 10.81L0.84 6.85L7.01 6.44Z" fill="none" stroke="#e59a2c" stroke-width="1" stroke-linejoin="miter"/></svg><div id="cn6" class="cn abs nw ser" style="top:631px;letter-spacing:-0.268px">VIP Serial</div><div class="mon abs" style="top:632px"></div><div class="pbox abs" style="top:653px"><div class="pbar" style="width:197px"></div></div><div class="ii abs" style="left:233px;top:660px">i</div><div id="pa6" class="pt abs nw ser" style="top:658px;">Сонная Лощина</div><div class="tm abs nw ser" style="top:658px"><span class="o0">1</span><span class="o0">1</span>:<span class="o0">0</span><span class="o0">0</span></div><div class="ii abs" style="left:233px;top:685px">i</div><div id="pb6" class="pt2 abs nw ser" style="top:683px;letter-spacing:-0.102px">Сонная Лощина</div><div class="sepl abs" style="top:705px"></div><div class="logo abs" style="top:711px"><svg width="68" height="68" viewBox="0 0 68 68"><defs><clipPath id="ct7"><circle cx="34.1" cy="28.4" r="23"/></clipPath>
<radialGradient id="gtr7" cx="0.5" cy="0.5" r="0.5"><stop offset="0.8" stop-color="rgba(0,0,0,0)"/><stop offset="1" stop-color="rgba(8,30,60,.55)"/></radialGradient>
<linearGradient id="gts7" x1="0" y1="0" x2="0" y2="1"><stop offset="0" stop-color="rgba(255,255,255,.18)"/><stop offset="0.5" stop-color="rgba(255,255,255,0)"/><stop offset="1" stop-color="rgba(255,255,255,.22)"/></linearGradient></defs>
<circle cx="34.1" cy="28.4" r="23" fill="#0d3d6d"/><path d="M34.1 29.5L34.10 1.90L55.73 -0.27L60.35 20.97Z" fill="#0d3d6d" clip-path="url(#ct7)"/><path d="M34.1 29.5L60.35 20.97L69.10 40.87L50.32 51.83Z" fill="#1c70ad" clip-path="url(#ct7)"/><path d="M34.1 29.5L50.32 51.83L34.10 66.30L17.88 51.83Z" fill="#0f4a86" clip-path="url(#ct7)"/><path d="M34.1 29.5L17.88 51.83L-0.90 40.87L7.85 20.97Z" fill="#2f90d2" clip-path="url(#ct7)"/><path d="M34.1 29.5L7.85 20.97L12.47 -0.27L34.10 1.90Z" fill="#3b97d2" clip-path="url(#ct7)"/>
<circle cx="34.1" cy="28.4" r="23" fill="url(#gts7)"/><circle cx="34.1" cy="28.4" r="23" fill="url(#gtr7)"/>
<path d="M34.10 6.20L39.58 21.96L56.26 22.30L42.96 32.38L47.80 48.35L34.10 38.82L20.40 48.35L25.24 32.38L11.94 22.30L28.62 21.96Z" fill="#fff"/><text x="16.200" y="62" font-family="Liberation Sans" font-weight="bold" font-size="9.200" fill="#1d5b8c" stroke="#1d5b8c" stroke-width="0.350" textLength="37.300" lengthAdjust="spacingAndGlyphs">TV 1000</text></svg></div><svg class="abs" style="left:230px;top:711px" width="19" height="18" viewBox="0 0 19 18"><path d="M9.30 0.70L11.59 6.44L17.76 6.85L13.01 10.81L14.53 16.80L9.30 13.50L4.07 16.80L5.59 10.81L0.84 6.85L7.01 6.44Z" fill="none" stroke="#e59a2c" stroke-width="1" stroke-linejoin="miter"/></svg><div id="cn7" class="cn abs nw ser" style="top:710px;letter-spacing:-0.331px">TV<span class="o0">1</span><span class="o0">0</span><span class="o0">0</span><span class="o0">0</span></div><div class="mon abs" style="top:711px"></div><div class="pbox abs" style="top:732px"><div class="pbar" style="width:242px"></div></div><div class="ii abs" style="left:233px;top:739px">i</div><div id="pa7" class="pt abs nw ser" style="top:737px;letter-spacing:0.218px">Обливион</div><div class="tm abs nw ser" style="top:737px"><span class="o0">1</span><span class="o0">1</span>:<span class="o3">4</span><span class="o3">5</span></div><div class="ii abs" style="left:233px;top:764px">i</div><div id="pb7" class="pt2 abs nw ser" style="top:762px;letter-spacing:-0.424px">Дюна</div><div class="sepl abs" style="top:784px"></div><div class="logo abs" style="top:790px"><svg width="68" height="68" viewBox="0 0 68 68"><defs><clipPath id="ct8"><circle cx="34" cy="27.3" r="21.8"/></clipPath>
<radialGradient id="gtr8" cx="0.5" cy="0.5" r="0.5"><stop offset="0.8" stop-color="rgba(0,0,0,0)"/><stop offset="1" stop-color="rgba(70,6,14,.5)"/></radialGradient>
<linearGradient id="gts8" x1="0" y1="0" x2="0" y2="1"><stop offset="0" stop-color="rgba(255,255,255,.18)"/><stop offset="0.5" stop-color="rgba(255,255,255,0)"/><stop offset="1" stop-color="rgba(255,255,255,.22)"/></linearGradient></defs>
<circle cx="34" cy="27.3" r="21.8" fill="#8f1c28"/><path d="M34 28.5L34.00 2.34L54.50 0.28L58.88 20.42Z" fill="#8f1c28" clip-path="url(#ct8)"/><path d="M34 28.5L58.88 20.42L67.17 39.28L49.38 49.66Z" fill="#cf3c4b" clip-path="url(#ct8)"/><path d="M34 28.5L49.38 49.66L34.00 63.38L18.62 49.66Z" fill="#e14f5e" clip-path="url(#ct8)"/><path d="M34 28.5L18.62 49.66L0.83 39.28L9.12 20.42Z" fill="#3c0911" clip-path="url(#ct8)"/><path d="M34 28.5L9.12 20.42L13.50 0.28L34.00 2.34Z" fill="#cb3646" clip-path="url(#ct8)"/>
<circle cx="34" cy="27.3" r="21.8" fill="url(#gts8)"/><circle cx="34" cy="27.3" r="21.8" fill="url(#gtr8)"/>
<path d="M34.00 6.40L39.20 21.35L55.02 21.67L42.41 31.23L46.99 46.38L34.00 37.34L21.01 46.38L25.59 31.23L12.98 21.67L28.80 21.35Z" fill="#fff"/><text x="16.700" y="54.400" font-family="Liberation Sans" font-weight="bold" font-size="5.300" fill="#b0103a" textLength="20.700" lengthAdjust="spacingAndGlyphs">ACTION</text>
<text x="16.700" y="61.700" font-family="Liberation Sans" font-weight="bold" font-size="9" fill="#b0103a" stroke="#b0103a" stroke-width="0.350" textLength="36.300" lengthAdjust="spacingAndGlyphs">TV 1000</text></svg></div><svg class="abs" style="left:230px;top:790px" width="19" height="18" viewBox="0 0 19 18"><path d="M9.30 0.70L11.59 6.44L17.76 6.85L13.01 10.81L14.53 16.80L9.30 13.50L4.07 16.80L5.59 10.81L0.84 6.85L7.01 6.44Z" fill="none" stroke="#e59a2c" stroke-width="1" stroke-linejoin="miter"/></svg><div id="cn8" class="cn abs nw ser" style="top:789px;letter-spacing:-0.219px">TV<span class="o0">1</span><span class="o0">0</span><span class="o0">0</span><span class="o0">0</span> Action</div><div class="mon abs" style="top:790px"></div><div class="pbox abs" style="top:811px"><div class="pbar" style="width:288px"></div></div><div class="ii abs" style="left:233px;top:818px">i</div><div id="pa8" class="pt abs nw ser" style="top:816px;letter-spacing:-0.159px">На гребне волны</div><div class="tm abs nw ser" style="top:816px"><span class="o0">1</span><span class="o0">1</span>:<span class="o3">3</span><span class="o0">0</span></div><div class="ii abs" style="left:233px;top:843px">i</div><div id="pb8" class="pt2 abs nw ser" style="top:841px;letter-spacing:-0.220px">Чёрный ястреб</div><div class="sepl abs" style="top:863px"></div><div class="logo abs" style="top:869px;height:3px"></div><div class="mon abs" style="top:869px;height:4px;border-bottom:0"></div><svg class="abs" style="left:230px;top:869px" width="19" height="3" viewBox="0 0 19 3"><path d="M9.30 0.70L11.59 6.44L17.76 6.85L13.01 10.81L14.53 16.80L9.30 13.50L4.07 16.80L5.59 10.81L0.84 6.85L7.01 6.44Z" fill="none" stroke="#e59a2c" stroke-width="1" stroke-linejoin="miter"/></svg><div class="abs" style="left:735px;top:75px;width:17px;height:797px;background:#000"></div>
<svg class="abs" style="left:735px;top:75px" width="17" height="797" viewBox="0 0 17 797">
<defs><pattern id="chk" width="2" height="2" patternUnits="userSpaceOnUse"><rect width="2" height="2" fill="#fff"/><rect width="1" height="1" fill="#000"/><rect x="1" y="1" width="1" height="1" fill="#000"/></pattern>
<linearGradient id="gsb" x1="0" y1="0" x2="1" y2="0"><stop offset="0" stop-color="#050505"/><stop offset="1" stop-color="#686868"/></linearGradient></defs>
<rect x="0" y="45" width="17" height="736" fill="url(#chk)"/><rect x="0" y="0" width="17" height="17" fill="#000"/><rect x="2" y="2" width="13.500" height="13.5" fill="url(#gsb)"/><path d="M1.600 15.8V1.6H15.400" fill="none" stroke="#f6f6f6" stroke-width="1.200"/><path d="M15.900 1.6V16.1H1.600" fill="none" stroke="#7c7c7c" stroke-width="1.300"/><path d="M5 10.5l3.500 -4l3.500 4z" fill="#000"/><rect x="0" y="17" width="17" height="28.5" fill="#000"/><rect x="2" y="19" width="13.500" height="25.0" fill="url(#gsb)"/><path d="M1.600 44.3V18.6H15.400" fill="none" stroke="#f6f6f6" stroke-width="1.200"/><path d="M15.900 18.6V44.6H1.600" fill="none" stroke="#7c7c7c" stroke-width="1.300"/><rect x="0" y="780" width="17" height="17" fill="#000"/><rect x="2" y="782" width="13.500" height="13.5" fill="url(#gsb)"/><path d="M1.600 795.8V781.6H15.400" fill="none" stroke="#f6f6f6" stroke-width="1.200"/><path d="M15.900 781.6V796.1H1.600" fill="none" stroke="#7c7c7c" stroke-width="1.300"/><path d="M4.500 786l4 4.300l4 -4.300z" fill="#000"/></svg>
<!-- p_right -->
<div id="rp" class="abs"></div><div id="rlogo" class="abs"><svg style="position:absolute;left:0;top:0" width="120" height="80" viewBox="0 0 120 80">
<rect x="27.5" y="7.5" width="66" height="66" rx="19" fill="#999" stroke="#8a8a8a" stroke-width="1.5"/>
<rect x="29.8" y="9.8" width="61.4" height="61.4" rx="17" fill="none" stroke="#fff" stroke-width="1.4"/>
<rect x="28.600" y="26" width="2.800" height="18" fill="#999"/>
<text x="29" y="39.5" font-family="Liberation Sans" font-size="18.4" fill="#fff" letter-spacing="-0.2">КИНО</text>
<text x="49" y="55" font-family="Liberation Sans" font-size="17.4" fill="#d4d4d4" letter-spacing="-0.2" stroke="#999" stroke-width="0.5">UHD</text>
</svg></div><div id="rtitle" class="abs nw">Кино UHD (Архив 3 августа в 5:19)</div><div id="rdate" class="abs nw">Вт 5:20:27 03.08.21</div><div id="rprog" class="abs nw">Приключения Паддингтона 2</div><div class="abs nw bt" style="left:921px;width:40px;text-align:right;top:186px">5:20</div><div id="pb" class="abs"></div><div id="pbt" class="abs">0%</div><div class="abs nw bt" style="left:1552px;top:186px">7:00</div><div id="hr1" class="abs"></div><div id="fbtn" class="abs"><svg width="29" height="29" viewBox="0 0 29 29"><path d="M3.5 4h22l-8.2 10.2v11.3l-5.6 -3.3v-8z" fill="#111"/><path d="M11.7 14.2h5.6" stroke="#e1e1e1" stroke-width="0.8"/></svg></div><div id="fcb" class="abs"><span>Фильтр...</span><svg style="position:absolute;right:4px;top:9px" width="12" height="7" viewBox="0 0 12 7"><path d="M0.6 0.7l5.4 5.3l5.4 -5.3" fill="none" stroke="#333" stroke-width="1.1"/></svg></div><div class="nb abs" style="left:775px"><svg width="34" height="32" viewBox="0 0 34 32"><path d="M19 6.500H24.800L14.500 16.400L24.800 25.400H19L9.100 16.400Z" fill="#e4e4e4" stroke="#1c1c1c" stroke-width="1.100" stroke-linejoin="miter"/></svg></div><div class="db abs" style="left:816px">Пн<br>02.08</div><div class="db abs dbs" style="left:871px">Вт<br>03.08</div><div class="db abs" style="left:926px">Ср<br>04.08</div><div class="db abs" style="left:981px">Чт<br>05.08</div><div class="db abs" style="left:1036px">Пт<br>06.08</div><div class="db abs" style="left:1091px">Сб<br>07.08</div><div class="db abs" style="left:1146px">Вс<br>08.08</div><div class="nb abs" style="left:1201px"><svg width="34" height="32" viewBox="0 0 34 32"><path d="M15 6.500H9.200L19.500 16.400L9.200 25.400H15L24.900 16.400Z" fill="#e4e4e4" stroke="#1c1c1c" stroke-width="1.100" stroke-linejoin="miter"/></svg></div><div id="now" class="abs">сейчас</div><svg width="0" height="0" style="position:absolute"><defs>
<radialGradient id="gplay" cx="0.5" cy="0.5" r="0.5"><stop offset="0" stop-color="#4a9af4"/><stop offset="0.6" stop-color="#2f74ea"/><stop offset="0.88" stop-color="#1a50e0"/><stop offset="1" stop-color="#0f34c8"/></radialGradient>
<radialGradient id="gplay3" cx="0.5" cy="0.3" r="0.7"><stop offset="0" stop-color="rgba(200,222,255,.75)"/><stop offset="1" stop-color="rgba(150,190,250,0)"/></radialGradient>
<radialGradient id="gplay2" cx="0.5" cy="0.6" r="0.6"><stop offset="0" stop-color="#9ff4ff"/><stop offset="1" stop-color="rgba(80,200,255,0)"/></radialGradient>
<linearGradient id="ginfo" x1="0" y1="0" x2="0" y2="1"><stop offset="0" stop-color="#0aa0ee"/><stop offset="0.5" stop-color="#0880d4"/><stop offset="1" stop-color="#0560b6"/></linearGradient>
</defs></svg><div id="epg" class="abs ser"><span class="eh" style="left:4px">Время</span><span class="eh" style="left:98px">Передача</span><span class="eh" style="left:376px">Жанр</span><span class="eh" style="left:491px">Длительность</span><div class="vsep" style="left:93px"></div><div class="vsep" style="left:371px"></div><div class="vsep" style="left:487px"></div><div class="vsep" style="left:785px"></div><div class="er old" style="top:26px"><svg style="position:absolute;left:3px;top:2px" width="24" height="24" viewBox="0 0 24 24"><circle cx="11.8" cy="11.8" r="10.900" fill="url(#gplay)" stroke="#1238cc" stroke-width="1"/><ellipse cx="11.8" cy="7" rx="7.500" ry="4.800" fill="url(#gplay3)"/><ellipse cx="11.8" cy="19.300" rx="6.500" ry="3.300" fill="url(#gplay2)"/><path d="M7.300 5.300v13.200l11.800 -6.600z" fill="#e4f2fe" stroke="#d4e8fb" stroke-width="0.500" stroke-linejoin="round"/></svg><span id="et0" class="c1" style="letter-spacing:0.373px"><span class="o0">0</span>:<span class="o0">0</span><span class="o0">0</span></span><span id="en0" class="c2" style="letter-spacing:-0.147px">Непотопляемые</span><svg style="position:absolute;left:373px;top:2px" width="24" height="24" viewBox="0 0 24 24"><circle cx="12" cy="11.800" r="10.600" fill="url(#ginfo)" stroke="#06213d" stroke-width="1.100"/><circle cx="12" cy="7.700" r="1.500" fill="#fff"/><path d="M10.200 11.200h3.400v6.500h1v1.100h-4.700v-1.100h1.100v-5.300h-0.800z" fill="#fff"/></svg><span id="ed0" class="c4" style="letter-spacing:0.172px"><span class="o0">0</span><span class="o0">2</span>:<span class="o0">0</span><span class="o0">0</span></span></div><div class="er alt old" style="top:54px"><svg style="position:absolute;left:3px;top:2px" width="24" height="24" viewBox="0 0 24 24"><circle cx="11.8" cy="11.8" r="10.900" fill="url(#gplay)" stroke="#1238cc" stroke-width="1"/><ellipse cx="11.8" cy="7" rx="7.500" ry="4.800" fill="url(#gplay3)"/><ellipse cx="11.8" cy="19.300" rx="6.500" ry="3.300" fill="url(#gplay2)"/><path d="M7.300 5.300v13.200l11.800 -6.600z" fill="#e4f2fe" stroke="#d4e8fb" stroke-width="0.500" stroke-linejoin="round"/></svg><span id="et1" class="c1" style="letter-spacing:0.023px"><span class="o0">2</span>:<span class="o0">0</span><span class="o0">0</span></span><span id="en1" class="c2" style="letter-spacing:-0.223px">Космос между нами</span><svg style="position:absolute;left:373px;top:2px" width="24" height="24" viewBox="0 0 24 24"><circle cx="12" cy="11.800" r="10.600" fill="url(#ginfo)" stroke="#06213d" stroke-width="1.100"/><circle cx="12" cy="7.700" r="1.500" fill="#fff"/><path d="M10.200 11.200h3.400v6.500h1v1.100h-4.700v-1.100h1.100v-5.300h-0.800z" fill="#fff"/></svg><span id="ed1" class="c4" style="letter-spacing:-0.388px"><span class="o0">0</span><span class="o0">1</span>:<span class="o3">5</span><span class="o3">5</span></span></div><div class="er old" style="top:82px"><svg style="position:absolute;left:3px;top:2px" width="24" height="24" viewBox="0 0 24 24"><circle cx="11.8" cy="11.8" r="10.900" fill="url(#gplay)" stroke="#1238cc" stroke-width="1"/><ellipse cx="11.8" cy="7" rx="7.500" ry="4.800" fill="url(#gplay3)"/><ellipse cx="11.8" cy="19.300" rx="6.500" ry="3.300" fill="url(#gplay2)"/><path d="M7.300 5.300v13.200l11.800 -6.600z" fill="#e4f2fe" stroke="#d4e8fb" stroke-width="0.500" stroke-linejoin="round"/></svg><span id="et2" class="c1" style="letter-spacing:-0.302px"><span class="o3">3</span>:<span class="o3">5</span><span class="o3">5</span></span><span id="en2" class="c2" style="letter-spacing:-0.136px">Астерикс: Земля Богов</span><svg style="position:absolute;left:373px;top:2px" width="24" height="24" viewBox="0 0 24 24"><circle cx="12" cy="11.800" r="10.600" fill="url(#ginfo)" stroke="#06213d" stroke-width="1.100"/><circle cx="12" cy="7.700" r="1.500" fill="#fff"/><path d="M10.200 11.200h3.400v6.500h1v1.100h-4.700v-1.100h1.100v-5.300h-0.800z" fill="#fff"/></svg><span id="ed2" class="c4" style="letter-spacing:-0.388px"><span class="o0">0</span><span class="o0">1</span>:<span class="o0">2</span><span class="o3">5</span></span></div><div class="er alt sel" style="top:110px"><svg style="position:absolute;left:3px;top:2px" width="24" height="24" viewBox="0 0 24 24"><circle cx="11.8" cy="11.8" r="10.900" fill="url(#gplay)" stroke="#1238cc" stroke-width="1"/><ellipse cx="11.8" cy="7" rx="7.500" ry="4.800" fill="url(#gplay3)"/><ellipse cx="11.8" cy="19.300" rx="6.500" ry="3.300" fill="url(#gplay2)"/><path d="M7.300 5.300v13.200l11.800 -6.600z" fill="#e4f2fe" stroke="#d4e8fb" stroke-width="0.500" stroke-linejoin="round"/></svg><span id="et3" class="c1" style="letter-spacing:0.016px"><span class="o3">5</span>:<span class="o0">2</span><span class="o0">0</span></span><span id="en3" class="c2" style="letter-spacing:0.131px">Приключения Паддингтона <span class="o0">2</span></span><svg style="position:absolute;left:373px;top:2px" width="24" height="24" viewBox="0 0 24 24"><circle cx="12" cy="11.800" r="10.600" fill="url(#ginfo)" stroke="#06213d" stroke-width="1.100"/><circle cx="12" cy="7.700" r="1.500" fill="#fff"/><path d="M10.200 11.200h3.400v6.500h1v1.100h-4.700v-1.100h1.100v-5.300h-0.800z" fill="#fff"/></svg><span id="ed3" class="c4" style="letter-spacing:0.047px"><span class="o0">0</span><span class="o0">1</span>:<span class="o3">4</span><span class="o0">0</span></span></div><div class="er old" style="top:138px"><svg style="position:absolute;left:3px;top:2px" width="24" height="24" viewBox="0 0 24 24"><circle cx="11.8" cy="11.8" r="10.900" fill="url(#gplay)" stroke="#1238cc" stroke-width="1"/><ellipse cx="11.8" cy="7" rx="7.500" ry="4.800" fill="url(#gplay3)"/><ellipse cx="11.8" cy="19.300" rx="6.500" ry="3.300" fill="url(#gplay2)"/><path d="M7.300 5.300v13.200l11.800 -6.600z" fill="#e4f2fe" stroke="#d4e8fb" stroke-width="0.500" stroke-linejoin="round"/></svg><span id="et4" class="c1" style="letter-spacing:0.023px"><span class="o3">7</span>:<span class="o0">0</span><span class="o0">0</span></span><span id="en4" class="c2" style="letter-spacing:-0.147px">Непотопляемые</span><svg style="position:absolute;left:373px;top:2px" width="24" height="24" viewBox="0 0 24 24"><circle cx="12" cy="11.800" r="10.600" fill="url(#ginfo)" stroke="#06213d" stroke-width="1.100"/><circle cx="12" cy="7.700" r="1.500" fill="#fff"/><path d="M10.200 11.200h3.400v6.500h1v1.100h-4.700v-1.100h1.100v-5.300h-0.800z" fill="#fff"/></svg><span id="ed4" class="c4" style="letter-spacing:0.172px"><span class="o0">0</span><span class="o0">2</span>:<span class="o0">0</span><span class="o0">0</span></span></div><div class="er alt" style="top:166px"><svg style="position:absolute;left:3px;top:2px" width="24" height="24" viewBox="0 0 24 24"><circle cx="11.8" cy="11.8" r="10.900" fill="url(#gplay)" stroke="#1238cc" stroke-width="1"/><ellipse cx="11.8" cy="7" rx="7.500" ry="4.800" fill="url(#gplay3)"/><ellipse cx="11.8" cy="19.300" rx="6.500" ry="3.300" fill="url(#gplay2)"/><path d="M7.300 5.300v13.200l11.800 -6.600z" fill="#e4f2fe" stroke="#d4e8fb" stroke-width="0.500" stroke-linejoin="round"/></svg><span id="et5" class="c1" style="letter-spacing:0.023px"><span class="o3">9</span>:<span class="o0">0</span><span class="o0">0</span></span><span id="en5" class="c2" style="letter-spacing:-0.223px">Космос между нами</span><svg style="position:absolute;left:373px;top:2px" width="24" height="24" viewBox="0 0 24 24"><circle cx="12" cy="11.800" r="10.600" fill="url(#ginfo)" stroke="#06213d" stroke-width="1.100"/><circle cx="12" cy="7.700" r="1.500" fill="#fff"/><path d="M10.200 11.200h3.400v6.500h1v1.100h-4.700v-1.100h1.100v-5.300h-0.800z" fill="#fff"/></svg><span id="ed5" class="c4" style="letter-spacing:-0.388px"><span class="o0">0</span><span class="o0">1</span>:<span class="o3">5</span><span class="o3">5</span></span></div><div class="er" style="top:194px"><span id="et6" class="c1b" style="letter-spacing:-0.368px"><span class="o0">1</span><span class="o0">0</span>:<span class="o3">5</span><span class="o3">5</span></span><span id="en6" class="c2" style="letter-spacing:-0.136px">Астерикс: Земля Богов</span><svg style="position:absolute;left:373px;top:2px" width="24" height="24" viewBox="0 0 24 24"><circle cx="12" cy="11.800" r="10.600" fill="url(#ginfo)" stroke="#06213d" stroke-width="1.100"/><circle cx="12" cy="7.700" r="1.500" fill="#fff"/><path d="M10.200 11.200h3.400v6.500h1v1.100h-4.700v-1.100h1.100v-5.300h-0.800z" fill="#fff"/></svg><span id="ed6" class="c4" style="letter-spacing:-0.388px"><span class="o0">0</span><span class="o0">1</span>:<span class="o0">2</span><span class="o3">5</span></span></div><div class="er alt" style="top:222px"><span id="et7" class="c1b" style="letter-spacing:0.072px"><span class="o0">1</span><span class="o0">2</span>:<span class="o0">2</span><span class="o0">0</span></span><span id="en7" class="c2" style="letter-spacing:0.005px">Приключения Паддингтона <span class="o0">2</span></span><svg style="position:absolute;left:373px;top:2px" width="24" height="24" viewBox="0 0 24 24"><circle cx="12" cy="11.800" r="10.600" fill="url(#ginfo)" stroke="#06213d" stroke-width="1.100"/><circle cx="12" cy="7.700" r="1.500" fill="#fff"/><path d="M10.200 11.200h3.400v6.500h1v1.100h-4.700v-1.100h1.100v-5.300h-0.800z" fill="#fff"/></svg><span id="ed7" class="c4" style="letter-spacing:-0.048px"><span class="o0">0</span><span class="o0">1</span>:<span class="o3">4</span><span class="o0">0</span></span></div><div class="er" style="top:250px"><span id="et8" class="c1b" style="letter-spacing:-0.068px"><span class="o0">1</span><span class="o3">4</span>:<span class="o0">0</span><span class="o0">0</span></span><span id="en8" class="c2" style="letter-spacing:-0.124px">Очень плохие мамочки <span class="o0">2</span></span><svg style="position:absolute;left:373px;top:2px" width="24" height="24" viewBox="0 0 24 24"><circle cx="12" cy="11.800" r="10.600" fill="url(#ginfo)" stroke="#06213d" stroke-width="1.100"/><circle cx="12" cy="7.700" r="1.500" fill="#fff"/><path d="M10.200 11.200h3.400v6.500h1v1.100h-4.700v-1.100h1.100v-5.300h-0.800z" fill="#fff"/></svg><span id="ed8" class="c4" style="letter-spacing:-0.048px"><span class="o0">0</span><span class="o0">1</span>:<span class="o3">4</span><span class="o0">0</span></span></div><div class="er alt" style="top:278px"><span id="et9" class="c1b" style="letter-spacing:-0.288px"><span class="o0">1</span><span class="o3">5</span>:<span class="o3">4</span><span class="o0">0</span></span><span id="en9" class="c2" style="letter-spacing:-0.117px">Блондинка в эфире. Прямая трансля...</span><svg style="position:absolute;left:373px;top:2px" width="24" height="24" viewBox="0 0 24 24"><circle cx="12" cy="11.800" r="10.600" fill="url(#ginfo)" stroke="#06213d" stroke-width="1.100"/><circle cx="12" cy="7.700" r="1.500" fill="#fff"/><path d="M10.200 11.200h3.400v6.500h1v1.100h-4.700v-1.100h1.100v-5.300h-0.800z" fill="#fff"/></svg><span id="ed9" class="c4" style="letter-spacing:-0.388px"><span class="o0">0</span><span class="o0">1</span>:<span class="o3">3</span><span class="o3">5</span></span></div><div class="er" style="top:306px"><span id="et10" class="c1b" style="letter-spacing:-0.600px"><span class="o0">1</span><span class="o3">7</span>:<span class="o0">1</span><span class="o3">5</span></span><span id="en10" class="c2" style="letter-spacing:-0.037px">Игрушки для взрослых</span><svg style="position:absolute;left:373px;top:2px" width="24" height="24" viewBox="0 0 24 24"><circle cx="12" cy="11.800" r="10.600" fill="url(#ginfo)" stroke="#06213d" stroke-width="1.100"/><circle cx="12" cy="7.700" r="1.500" fill="#fff"/><path d="M10.200 11.200h3.400v6.500h1v1.100h-4.700v-1.100h1.100v-5.300h-0.800z" fill="#fff"/></svg><span id="ed10" class="c4" style="letter-spacing:-0.388px"><span class="o0">0</span><span class="o0">1</span>:<span class="o0">2</span><span class="o3">5</span></span></div><div class="er alt" style="top:334px"><span id="et11" class="c1b" style="letter-spacing:-0.288px"><span class="o0">1</span>8:<span class="o3">4</span><span class="o0">0</span></span><span id="en11" class="c2" style="letter-spacing:-0.157px">Несносные леди</span><svg style="position:absolute;left:373px;top:2px" width="24" height="24" viewBox="0 0 24 24"><circle cx="12" cy="11.800" r="10.600" fill="url(#ginfo)" stroke="#06213d" stroke-width="1.100"/><circle cx="12" cy="7.700" r="1.500" fill="#fff"/><path d="M10.200 11.200h3.400v6.500h1v1.100h-4.700v-1.100h1.100v-5.300h-0.800z" fill="#fff"/></svg><span id="ed11" class="c4" style="letter-spacing:-0.388px"><span class="o0">0</span><span class="o0">1</span>:<span class="o3">5</span><span class="o3">5</span></span></div><div style="position:absolute;left:786px;top:0;width:17px;height:358px;background:#f0f0f0"></div>
<div style="position:absolute;left:788px;top:18px;width:14px;height:255px;background:#cdcdcd"></div>
<svg style="position:absolute;left:786px;top:0" width="17" height="358" viewBox="0 0 17 358"><path d="M5 11l3.5 -3.5l3.5 3.5" fill="none" stroke="#606060" stroke-width="1.6"/><path d="M5 346.5l3.5 3.5l3.5 -3.5" fill="none" stroke="#606060" stroke-width="1.6"/></svg></div><div id="dtitle" class="abs nw">Приключения Паддингтона 2</div><div id="desc" class="abs ser"><span class="dl" style="letter-spacing:0px">В антикварном магазине Лондона Паддингтон находит уникальную старинную книгу. Пока он изо всех своих</span><br><span class="dl" style="letter-spacing:-0.129px">медвежьих сил старается накопить деньги на редчайшее издание, вышедший в тираж знаменитый актер,</span><br><span class="dl" style="letter-spacing:-0.14px">который теперь рекламирует собачьи консервы, а по совместительству является гениальным вором, похищает</span><br><span class="dl" style="letter-spacing:-0.197px">фолиант. Теперь медвежонок должен раскрыть кражу века...</span></div>
<!-- p_tabs -->
<div id="tabbar" class="abs"></div><svg class="tab abs" style="left:159px" width="144" height="36" viewBox="0 0 144 36"><path d="M0.600 2a1.400 1.400 0 0 1 1.400 -1.400h140a1.400 1.400 0 0 1 1.400 1.400v28l-4.500 5.400h-134l-4.500 -5.400z" fill="#f3f3f3" stroke="#a2a2a2" stroke-width="1.300"/><path d="M1.5 30l4 5h133l4 -5" fill="none" stroke="#d9d9d9" stroke-width="1"/></svg><svg class="tab abs" style="left:305px" width="144" height="36" viewBox="0 0 144 36"><path d="M0.600 2a1.400 1.400 0 0 1 1.400 -1.400h140a1.400 1.400 0 0 1 1.400 1.400v28l-4.500 5.400h-134l-4.500 -5.400z" fill="#c8c8c8" stroke="#7e7e7e" stroke-width="1.300"/><path d="M1.800 30v-28h140.400" fill="none" stroke="#d9d9d9" stroke-width="1"/></svg><svg class="tab abs" style="left:451px" width="144" height="36" viewBox="0 0 144 36"><path d="M0.600 2a1.400 1.400 0 0 1 1.400 -1.400h140a1.400 1.400 0 0 1 1.400 1.400v28l-4.500 5.400h-134l-4.500 -5.400z" fill="#c8c8c8" stroke="#7e7e7e" stroke-width="1.300"/><path d="M1.800 30v-28h140.400" fill="none" stroke="#d9d9d9" stroke-width="1"/></svg><svg class="tab abs" style="left:597px" width="144" height="36" viewBox="0 0 144 36"><path d="M0.600 2a1.400 1.400 0 0 1 1.400 -1.400h140a1.400 1.400 0 0 1 1.400 1.400v28l-4.500 5.400h-134l-4.500 -5.400z" fill="#c8c8c8" stroke="#7e7e7e" stroke-width="1.300"/><path d="M1.800 30v-28h140.400" fill="none" stroke="#d9d9d9" stroke-width="1"/></svg><svg class="abs" style="left:160px;top:875px" width="584" height="36" viewBox="160 875 584 36">
<defs><linearGradient id="gtv2" x1="0" y1="0" x2="0" y2="1"><stop offset="0" stop-color="#5fe86a"/><stop offset="1" stop-color="#3fcf52"/></linearGradient>
<linearGradient id="gtvs2" x1="0" y1="0" x2="1" y2="1"><stop offset="0" stop-color="#f4fbf4"/><stop offset="1" stop-color="#bfe8c2"/></linearGradient>
<linearGradient id="grad" x1="0" y1="0" x2="0" y2="1"><stop offset="0" stop-color="#7fb4f0"/><stop offset="1" stop-color="#b48af0"/></linearGradient>
<radialGradient id="grec" cx="0.4" cy="0.3" r="0.8"><stop offset="0" stop-color="#e02a1c"/><stop offset="0.6" stop-color="#cc140c"/><stop offset="1" stop-color="#8a0806"/></radialGradient>
<filter id="blur1"><feGaussianBlur stdDeviation="0.6"/></filter></defs>
<g filter="url(#blur1)">
<path d="M174.5 880.5l4 5l4 -5" fill="none" stroke="#4fd85c" stroke-width="1.4"/>
<rect x="167" y="885" width="23.5" height="16.5" rx="2" fill="url(#gtv2)"/>
<rect x="169" y="887.5" width="16" height="11.5" rx="1" fill="url(#gtvs2)"/>
<rect x="186.5" y="889" width="2" height="5" fill="#d8f8da"/><rect x="186.5" y="896" width="2" height="2" fill="#d8f8da"/>
<!-- radio -->
<path d="M316 886l18 -5.5" stroke="#7fb4f0" stroke-width="1.5"/>
<rect x="313.5" y="886.5" width="23" height="16" rx="3" fill="#cfd8f4" stroke="url(#grad)" stroke-width="1.8"/>
<circle cx="320" cy="895" r="2.3" fill="none" stroke="#9a9af0" stroke-width="1.3"/>
<circle cx="329.5" cy="894.5" r="4.8" fill="#9aa4f0"/><circle cx="331.5" cy="894.5" r="3" fill="#d4dcf8"/>
<path d="M317 904v1.5M333 904v1.5" stroke="#b48af0" stroke-width="2"/>
</g>
<!-- record -->
<circle cx="471" cy="892" r="9.300" fill="url(#grec)"/><path d="M461.900 893.500a9.300 9.300 0 0 1 18.300 -2.500c-5 -3.500 -13 -2.500 -18.300 2.500z" fill="rgba(150,80,80,.62)"/>
<!-- camera -->
<g filter="url(#blur1)"><circle cx="612.500" cy="884.300" r="3.500" fill="#2cb4f0"/><circle cx="620.500" cy="884.300" r="3.500" fill="#2cb4f0"/><rect x="606.500" y="887.500" width="17.500" height="11.500" rx="2" fill="#1c8fd6"/><path d="M623 892l6.500 -3.800v10.800l-6.500 -3.800z" fill="#1c8fd6"/><path d="M608 899h4v1.500h-4zM618.500 899h4v1.500h-4z" fill="#1c8fd6"/></g>
<path d="M615.300 890.600v5.200M612.700 893.200h5.200" stroke="#9fd8f6" stroke-width="1.200"/>
</svg><div class="tabl abs nw" style="left:193px">Каналы</div><div class="tabl abs nw g" style="left:338px">Файлы</div><div class="tabl abs nw g" style="left:484px">Записи</div><div class="tabl abs nw g" style="left:630px">Видеотека</div>
<!-- p_taskbar -->
<div id="tk" class="abs"></div><div id="tk0" class="abs"></div><div id="tkl" class="abs"></div><div id="tkact" class="abs"></div><div class="tku abs" style="left:190px;width:28px"></div><div class="tku abs" style="left:227px;width:28px"></div><div class="tku abs" style="left:264px;width:28px"></div><div class="tku abs" style="left:301px;width:28px"></div><div class="tku abs" style="left:334px;width:36px"></div><div class="abs" style="left:368px;top:913px;width:1px;height:30px;background:#4a4a4a"></div><svg class="abs" style="left:40px;top:913px" width="340" height="30" viewBox="40 913 340 30">
<defs><linearGradient id="gtk" x1="0" y1="0" x2="0" y2="1"><stop offset="0" stop-color="#8fe04a"/><stop offset="1" stop-color="#2f9a12"/></linearGradient>
<linearGradient id="gnp" x1="0" y1="0" x2="1" y2="1"><stop offset="0" stop-color="#dff2fb"/><stop offset="1" stop-color="#7fb4d0"/></linearGradient></defs>
<!-- windows logo -->
<path d="M48 922.3l6.6 -0.9v6.2h-6.6zM55.5 921.3l8.5 -1.2v7.5h-8.5zM48 928.5h6.6v6.2l-6.6 -0.9zM55.5 928.5h8.5v7.6l-8.5 -1.2z" fill="#fff"/>
<!-- search -->
<circle cx="94.5" cy="925.5" r="5" fill="none" stroke="#fff" stroke-width="1.4"/><path d="M91 929.3l-6.5 6.5" stroke="#fff" stroke-width="1.6"/>
<!-- task view -->
<rect x="120.7" y="920.7" width="9.6" height="5.6" fill="none" stroke="#fff" stroke-width="1.3"/><rect x="120.7" y="929.7" width="9.6" height="5.6" fill="none" stroke="#fff" stroke-width="1.3"/>
<path d="M134.5 920v6.5M134.5 929v1.5M134.5 932v4" stroke="#fff" stroke-width="1.5"/>
<!-- sticky -->
<rect x="160" y="921" width="14" height="14" fill="#ffd60a"/><path d="M174 928.5v6.5h-6.5z" fill="#3a3a3a"/><path d="M174 930.5v4.5h-2.5z" fill="#f0a30a"/>
<!-- explorer -->
<path d="M197 923h5l1.2 1.5h8v10h-14.2z" fill="#f7c64a"/><path d="M197 926h14.2v8.5h-14.2z" fill="#ffd96a"/><path d="M200 930h8.5v5h-8.5z" fill="#2f8fe8"/><rect x="202.2" y="932" width="4" height="3" fill="#ffd96a"/>
<!-- chrome -->
<circle cx="241" cy="928" r="7.3" fill="#e8423a"/><path d="M241 928l-6.3 3.6a7.3 7.3 0 0 0 6.3 3.7l3.5 -6z" fill="#3aa856"/><path d="M241 928l3.2 5.5a7.3 7.3 0 0 0 2.9 -9.2h-6.5z" fill="#fbc116"/><path d="M234.4 924.7a7.3 7.3 0 0 1 13 -0.4h-6.4z" fill="#e8423a"/>
<circle cx="241" cy="928" r="3.4" fill="#fff"/><circle cx="241" cy="928" r="2.6" fill="#4a8af4"/>
<!-- notepad -->
<path d="M274.5 921.5h9.5l-2.2 12.8h-11.8z" fill="url(#gnp)" stroke="#9ac4dc" stroke-width="0.6"/><path d="M281.8 934.3l2.2 -12.8l1 1l-1.5 11z" fill="#e8a84a"/>
<!-- excel -->
<rect x="311" y="921" width="12" height="14" rx="1" fill="#1f9a55"/><rect x="317" y="921" width="6" height="4.7" fill="#3fc87a"/><rect x="317" y="930.3" width="6" height="4.7" fill="#157a42"/>
<rect x="307" y="924" width="9" height="8.5" rx="0.8" fill="#107c41"/><path d="M309.6 925.8l3.8 5M313.4 925.8l-3.8 5" stroke="#fff" stroke-width="1.2"/>
<!-- tv -->
<rect x="344.5" y="922.5" width="15" height="9" rx="0.8" fill="url(#gtk)" stroke="#3d6a2a" stroke-width="0.8"/><path d="M345 932h14l-2 2h-10z" fill="#2c3e50"/>
<text x="352" y="929.6" font-family="Liberation Serif" font-weight="bold" font-size="7.5" fill="#fff" text-anchor="middle">TV</text>
</svg>
<!-- p_arrow -->
<svg class="abs" style="left:715px;top:450px" width="145" height="195" viewBox="715 450 145 195">
<path d="M788 461.5L726.5 549.5H757.5V638.5H818.5V549.5H849.5Z" fill="none" stroke="#22b14c" stroke-width="4.3" stroke-linejoin="miter"/></svg>
</body></html>
